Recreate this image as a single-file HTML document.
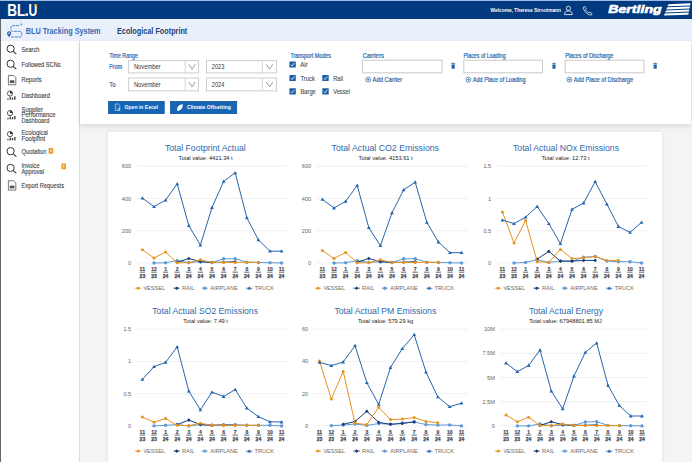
<!DOCTYPE html>
<html><head><meta charset="utf-8">
<style>
*{box-sizing:border-box;margin:0;padding:0}
html,body{width:692px;height:462px;overflow:hidden;background:#f3f4f6;font-family:"Liberation Sans", sans-serif;}
.a{position:absolute}
#hdr{left:0;top:0;width:692px;height:19px;background:#023a7f;border-top:1px solid #9ebbe6}
#sub{left:0;top:19px;width:692px;height:22px;background:#eaf0fb}
#side{left:0;top:41px;width:80px;height:421px;background:#fff;border-right:1px solid #dcdcdc}
#lb{left:0;top:19px;width:1px;height:443px;background:#666}
#filt{left:80px;top:41px;width:611px;height:83px;background:#fff;box-shadow:0 2px 5px rgba(0,0,0,0.12)}
#card{left:108px;top:132px;width:554px;height:340px;background:#fff;box-shadow:0 0 4px rgba(0,0,0,0.10)}
</style></head><body>
<div class="a" id="hdr"></div>
<div class="a" id="sub"></div>
<div class="a" id="side"></div>
<div class="a" id="lb"></div>
<div class="a" id="filt"></div>
<div class="a" id="card"></div>
<svg class="a" style="left:0;top:0" width="692" height="462" viewBox="0 0 692 462" font-family='"Liberation Sans", sans-serif'>
<text x="7.2" y="15.8" font-size="16.6" fill="#fff" textLength="18.0" lengthAdjust="spacingAndGlyphs" font-weight="bold">BL</text>
<rect x="25.4" y="13.4" width="2.6" height="2.4" fill="#fff"/>
<text x="28.4" y="15.8" font-size="16.6" fill="#fff" textLength="8.8" lengthAdjust="spacingAndGlyphs" font-weight="bold">U</text>
<rect x="34.2" y="4" width="2.8" height="2.2" fill="#e39a3a"/>
<text x="490.6" y="12.2" font-size="6.2" fill="#fff" textLength="70.4" lengthAdjust="spacingAndGlyphs" font-weight="bold">Welcome, Therese Strootmann</text>
<circle cx="568.4" cy="8.3" r="2.1" fill="none" stroke="#fff" stroke-width="0.8"/>
<path d="M564.6 14.6 C564.6 11.6 566.2 10.9 568.4 10.9 C570.6 10.9 572.2 11.6 572.2 14.6 Z" fill="none" stroke="#fff" stroke-width="0.8"/>
<path d="M583.5 7.2 C583.2 8.2 583.8 10.6 586.2 12.8 C588.6 15 590.6 15.3 591.6 14.8 L592 13.6 L589.9 12.2 L588.8 12.9 C587.6 12.3 586.1 10.8 585.5 9.6 L586.2 8.5 L584.8 6.4 Z" fill="none" stroke="#fff" stroke-width="0.75" stroke-linejoin="round"/>
<text x="608.2" y="12.9" font-size="11.0" fill="#fff" textLength="53.6" lengthAdjust="spacingAndGlyphs" font-weight="bold" font-style="italic" stroke="#fff" stroke-width="0.55">Bertling</text>
<path d="M668.5 4.2 L690.5 3.3 L690.2 5.4 L667.5 6.3 Z" fill="#fff"/>
<path d="M667.3 7.3 L689.9 6.4 L689.6 8.5 L666.3 9.4 Z" fill="#fff"/>
<path d="M666.1 10.4 L689.3 9.5 L689.0 11.6 L665.1 12.5 Z" fill="#fff"/>
<path d="M664.9 13.5 L688.7 12.6 L688.4 14.7 L663.9 15.6 Z" fill="#fff"/>
<path d="M19.2 25.6 L12.6 25.6 C10.2 25.6 10.2 31.4 12.6 31.4 L19.8 31.4 C22.6 31.4 22.6 37 19.8 37 L10.8 37" fill="none" stroke="#3f76bb" stroke-width="0.85" stroke-dasharray="3.2 0.6"/>
<path d="M9.1 37.3 C7.8 35.6 7.0 34.6 7.0 33.3 A2.1 2.1 0 0 1 11.2 33.3 C11.2 34.6 10.4 35.6 9.1 37.3 Z" fill="#2f6ab3"/>
<circle cx="9.1" cy="33.3" r="0.8" fill="#eaf0fb"/>
<path d="M20.3 23.8 L22.3 23.8 L21.3 25.4 Z" fill="#2f6ab3"/>
<text x="25.7" y="33.5" font-size="8.6" fill="#2f6db5" textLength="74.9" lengthAdjust="spacingAndGlyphs" font-weight="bold">BLU Tracking System</text>
<text x="117.0" y="33.5" font-size="8.6" fill="#22426f" textLength="70.3" lengthAdjust="spacingAndGlyphs" font-weight="bold">Ecological Footprint</text>
<text x="21.5" y="51.7" font-size="6.9" fill="#3f3f3f" textLength="18.0" lengthAdjust="spacingAndGlyphs" stroke="#3f3f3f" stroke-width="0.12">Search</text>
<circle cx="10.6" cy="48.7" r="3.6" fill="none" stroke="#363636" stroke-width="1.0"/>
<line x1="13.1" y1="51.2" x2="16.3" y2="54.1" stroke="#363636" stroke-width="1.1"/>
<text x="21.5" y="66.8" font-size="6.9" fill="#3f3f3f" textLength="39.1" lengthAdjust="spacingAndGlyphs" stroke="#3f3f3f" stroke-width="0.12">Followed SCNs</text>
<circle cx="10.6" cy="63.8" r="3.6" fill="none" stroke="#363636" stroke-width="1.0"/>
<line x1="13.1" y1="66.3" x2="16.3" y2="69.2" stroke="#363636" stroke-width="1.1"/>
<text x="21.5" y="82.2" font-size="6.9" fill="#3f3f3f" textLength="20.2" lengthAdjust="spacingAndGlyphs" stroke="#3f3f3f" stroke-width="0.12">Reports</text>
<path d="M8.4 75.4 L13.6 75.4 L15.8 77.6 L15.8 84.8 L8.4 84.8 Z" fill="none" stroke="#555" stroke-width="0.8"/>
<rect x="9.8" y="80.3" width="4.6" height="2.8" fill="#555"/>
<text x="21.5" y="97.5" font-size="6.9" fill="#3f3f3f" textLength="28.5" lengthAdjust="spacingAndGlyphs" stroke="#3f3f3f" stroke-width="0.12">Dashboard</text>
<circle cx="10.0" cy="93.5" r="2.6" fill="none" stroke="#333" stroke-width="0.8"/>
<path d="M10.0 93.5 L10.0 90.9 A2.6 2.6 0 0 1 12.6 93.5 Z" fill="#333"/>
<rect x="7.3" y="98.4" width="1.3" height="1.3" fill="#333"/>
<rect x="9.6" y="96.9" width="1.3" height="2.8" fill="#333"/>
<rect x="11.9" y="97.5" width="1.3" height="2.2" fill="#333"/>
<rect x="14.2" y="96.3" width="1.3" height="3.4" fill="#333"/>
<text x="21.5" y="111.5" font-size="6.9" fill="#3f3f3f" textLength="21.5" lengthAdjust="spacingAndGlyphs" stroke="#3f3f3f" stroke-width="0.12">Supplier</text>
<text x="21.5" y="117.2" font-size="6.9" fill="#3f3f3f" textLength="34.0" lengthAdjust="spacingAndGlyphs" stroke="#3f3f3f" stroke-width="0.12">Performance</text>
<text x="21.5" y="122.7" font-size="6.9" fill="#3f3f3f" textLength="27.8" lengthAdjust="spacingAndGlyphs" stroke="#3f3f3f" stroke-width="0.12">Dashboard</text>
<circle cx="10.0" cy="113.1" r="2.6" fill="none" stroke="#333" stroke-width="0.8"/>
<path d="M10.0 113.1 L10.0 110.5 A2.6 2.6 0 0 1 12.6 113.1 Z" fill="#333"/>
<rect x="7.3" y="118.0" width="1.3" height="1.3" fill="#333"/>
<rect x="9.6" y="116.5" width="1.3" height="2.8" fill="#333"/>
<rect x="11.9" y="117.1" width="1.3" height="2.2" fill="#333"/>
<rect x="14.2" y="115.9" width="1.3" height="3.4" fill="#333"/>
<text x="21.5" y="135.1" font-size="6.9" fill="#3f3f3f" textLength="26.4" lengthAdjust="spacingAndGlyphs" stroke="#3f3f3f" stroke-width="0.12">Ecological</text>
<text x="21.5" y="141.1" font-size="6.9" fill="#3f3f3f" textLength="23.8" lengthAdjust="spacingAndGlyphs" stroke="#3f3f3f" stroke-width="0.12">Footprint</text>
<circle cx="10.0" cy="134.1" r="2.6" fill="none" stroke="#333" stroke-width="0.8"/>
<path d="M10.0 134.1 L10.0 131.5 A2.6 2.6 0 0 1 12.6 134.1 Z" fill="#333"/>
<rect x="7.3" y="139.0" width="1.3" height="1.3" fill="#333"/>
<rect x="9.6" y="137.5" width="1.3" height="2.8" fill="#333"/>
<rect x="11.9" y="138.1" width="1.3" height="2.2" fill="#333"/>
<rect x="14.2" y="136.9" width="1.3" height="3.4" fill="#333"/>
<text x="21.5" y="154.2" font-size="6.9" fill="#3f3f3f" textLength="25.0" lengthAdjust="spacingAndGlyphs" stroke="#3f3f3f" stroke-width="0.12">Quotation</text>
<circle cx="10.6" cy="151.2" r="3.6" fill="none" stroke="#363636" stroke-width="1.0"/>
<line x1="13.1" y1="153.7" x2="16.3" y2="156.6" stroke="#363636" stroke-width="1.1"/>
<text x="21.5" y="167.9" font-size="6.9" fill="#3f3f3f" textLength="18.1" lengthAdjust="spacingAndGlyphs" stroke="#3f3f3f" stroke-width="0.12">Invoice</text>
<text x="21.5" y="173.8" font-size="6.9" fill="#3f3f3f" textLength="22.5" lengthAdjust="spacingAndGlyphs" stroke="#3f3f3f" stroke-width="0.12">Approval</text>
<circle cx="10.6" cy="167.9" r="3.6" fill="none" stroke="#363636" stroke-width="1.0"/>
<line x1="13.1" y1="170.4" x2="16.3" y2="173.3" stroke="#363636" stroke-width="1.1"/>
<text x="21.5" y="187.5" font-size="6.9" fill="#3f3f3f" textLength="42.6" lengthAdjust="spacingAndGlyphs" stroke="#3f3f3f" stroke-width="0.12">Export Requests</text>
<path d="M8.4 180.7 L13.6 180.7 L15.8 182.9 L15.8 190.1 L8.4 190.1 Z" fill="none" stroke="#555" stroke-width="0.8"/>
<rect x="9.8" y="185.6" width="4.6" height="2.8" fill="#555"/>
<rect x="48.6" y="148.0" width="4.6" height="5.8" rx="0.6" fill="#ee9a2a"/><rect x="50.2" y="149.4" width="1.4" height="2.6" fill="#fbd9a8"/>
<rect x="61.4" y="163.4" width="4.6" height="5.8" rx="0.6" fill="#ee9a2a"/><rect x="63.0" y="164.8" width="1.4" height="2.6" fill="#fbd9a8"/>
<text x="109.3" y="57.9" font-size="6.4" fill="#2f6cb0" textLength="28.7" lengthAdjust="spacingAndGlyphs" stroke="#2f6cb0" stroke-width="0.22">Time Range</text>
<text x="109.3" y="69.1" font-size="6.4" fill="#2f6cb0" textLength="12.7" lengthAdjust="spacingAndGlyphs" stroke="#2f6cb0" stroke-width="0.22">From</text>
<text x="109.3" y="86.9" font-size="6.4" fill="#2f6cb0" textLength="6.2" lengthAdjust="spacingAndGlyphs" stroke="#2f6cb0" stroke-width="0.22">To</text>
<text x="290.4" y="57.9" font-size="6.4" fill="#2f6cb0" textLength="40.6" lengthAdjust="spacingAndGlyphs" stroke="#2f6cb0" stroke-width="0.22">Transport Modes</text>
<text x="362.7" y="57.9" font-size="6.4" fill="#2f6cb0" textLength="21.2" lengthAdjust="spacingAndGlyphs" stroke="#2f6cb0" stroke-width="0.22">Carriers</text>
<text x="463.6" y="57.9" font-size="6.4" fill="#2f6cb0" textLength="42.0" lengthAdjust="spacingAndGlyphs" stroke="#2f6cb0" stroke-width="0.22">Places of Loading</text>
<text x="565.2" y="57.9" font-size="6.4" fill="#2f6cb0" textLength="48.0" lengthAdjust="spacingAndGlyphs" stroke="#2f6cb0" stroke-width="0.22">Places of Discharge</text>
<rect x="128.6" y="60.6" width="69.8" height="12.3" fill="#fff" stroke="#cdcdcd" stroke-width="1"/>
<line x1="185.2" x2="185.2" y1="61.1" y2="72.4" stroke="#cdcdcd" stroke-width="0.8"/>
<path d="M188.9 64.3 L192.1 69.2 L195.2 64.3" fill="none" stroke="#777" stroke-width="0.7"/>
<text x="133.9" y="69.2" font-size="6.8" fill="#333" textLength="26.7" lengthAdjust="spacingAndGlyphs">November</text>
<rect x="206.5" y="60.6" width="70.0" height="12.3" fill="#fff" stroke="#cdcdcd" stroke-width="1"/>
<line x1="262.3" x2="262.3" y1="61.1" y2="72.4" stroke="#cdcdcd" stroke-width="0.8"/>
<path d="M266.4 64.3 L269.6 69.2 L272.8 64.3" fill="none" stroke="#777" stroke-width="0.7"/>
<text x="211.8" y="69.2" font-size="6.8" fill="#333" textLength="12.6" lengthAdjust="spacingAndGlyphs">2023</text>
<rect x="128.6" y="78.0" width="69.8" height="12.9" fill="#fff" stroke="#cdcdcd" stroke-width="1"/>
<line x1="185.2" x2="185.2" y1="78.5" y2="90.4" stroke="#cdcdcd" stroke-width="0.8"/>
<path d="M188.9 82.0 L192.1 86.9 L195.2 82.0" fill="none" stroke="#777" stroke-width="0.7"/>
<text x="133.9" y="86.9" font-size="6.8" fill="#333" textLength="26.7" lengthAdjust="spacingAndGlyphs">November</text>
<rect x="206.5" y="78.0" width="70.0" height="12.9" fill="#fff" stroke="#cdcdcd" stroke-width="1"/>
<line x1="262.3" x2="262.3" y1="78.5" y2="90.4" stroke="#cdcdcd" stroke-width="0.8"/>
<path d="M266.4 82.0 L269.6 86.9 L272.8 82.0" fill="none" stroke="#777" stroke-width="0.7"/>
<text x="211.8" y="86.9" font-size="6.8" fill="#333" textLength="12.6" lengthAdjust="spacingAndGlyphs">2024</text>
<rect x="108.6" y="101.4" width="55.6" height="12.2" fill="#1766b3" stroke="#0e56a0" stroke-width="0.8"/>
<rect x="170.5" y="101.4" width="66.2" height="12.2" fill="#1766b3" stroke="#0e56a0" stroke-width="0.8"/>
<text x="124.6" y="109.4" font-size="6.2" fill="#fff" textLength="33.4" lengthAdjust="spacingAndGlyphs" font-weight="bold">Open in Excel</text>
<text x="187.0" y="109.4" font-size="6.2" fill="#fff" textLength="43.8" lengthAdjust="spacingAndGlyphs" font-weight="bold">Climate Offsetting</text>
<path d="M115.4 104.0 L118.2 104.0 L119.8 105.6 L119.8 110.4 L115.4 110.4 Z" fill="none" stroke="#dfeaf7" stroke-width="0.6"/><path d="M117.6 108.0 L119.8 110.6 M119.8 108.0 L117.6 110.6" stroke="#fff" stroke-width="0.6"/>
<path d="M177.2 110.8 C176.6 107 178.6 104.6 182.8 104.2 C182.8 108.2 181 110.6 177.2 110.8 Z" fill="#fff"/>
<rect x="289.4" y="61.4" width="6.4" height="6.2" rx="0.4" fill="#1c5ea8"/>
<path d="M290.9 64.7 L292.1 66.0 L294.4 63.0" fill="none" stroke="#fff" stroke-width="0.8"/>
<text x="300.2" y="66.9" font-size="6.9" fill="#4a4a4a" textLength="7.5" lengthAdjust="spacingAndGlyphs" stroke="#4a4a4a" stroke-width="0.1">Air</text>
<rect x="289.4" y="74.9" width="6.4" height="6.2" rx="0.4" fill="#1c5ea8"/>
<path d="M290.9 78.2 L292.1 79.5 L294.4 76.5" fill="none" stroke="#fff" stroke-width="0.8"/>
<text x="300.5" y="80.6" font-size="6.9" fill="#4a4a4a" textLength="14.3" lengthAdjust="spacingAndGlyphs" stroke="#4a4a4a" stroke-width="0.1">Truck</text>
<rect x="322.3" y="74.9" width="6.4" height="6.2" rx="0.4" fill="#1c5ea8"/>
<path d="M323.8 78.2 L325.0 79.5 L327.3 76.5" fill="none" stroke="#fff" stroke-width="0.8"/>
<text x="333.2" y="80.6" font-size="6.9" fill="#4a4a4a" textLength="9.7" lengthAdjust="spacingAndGlyphs" stroke="#4a4a4a" stroke-width="0.1">Rail</text>
<rect x="289.4" y="88.2" width="6.4" height="6.2" rx="0.4" fill="#1c5ea8"/>
<path d="M290.9 91.5 L292.1 92.8 L294.4 89.8" fill="none" stroke="#fff" stroke-width="0.8"/>
<text x="300.5" y="93.9" font-size="6.9" fill="#4a4a4a" textLength="15.3" lengthAdjust="spacingAndGlyphs" stroke="#4a4a4a" stroke-width="0.1">Barge</text>
<rect x="322.3" y="88.2" width="6.4" height="6.2" rx="0.4" fill="#1c5ea8"/>
<path d="M323.8 91.5 L325.0 92.8 L327.3 89.8" fill="none" stroke="#fff" stroke-width="0.8"/>
<text x="333.2" y="93.9" font-size="6.9" fill="#4a4a4a" textLength="16.8" lengthAdjust="spacingAndGlyphs" stroke="#4a4a4a" stroke-width="0.1">Vessel</text>
<rect x="362.5" y="60.2" width="79.6" height="12.6" fill="#fff" stroke="#c9c9c9" stroke-width="1"/>
<rect x="451.6" y="64.6" width="3.2" height="4.2" rx="0.4" fill="#2666ad"/>
<rect x="451.0" y="63.4" width="4.4" height="0.8" fill="#2666ad"/>
<rect x="452.4" y="62.7" width="1.6" height="0.8" fill="#2666ad"/>
<circle cx="368.2" cy="79.6" r="2.5" fill="none" stroke="#2b66aa" stroke-width="0.7"/>
<path d="M366.8 79.6 L369.6 79.6 M368.2 78.2 L368.2 81" stroke="#2b66aa" stroke-width="0.7"/>
<text x="372.6" y="81.8" font-size="6.6" fill="#2b66aa" textLength="29.7" lengthAdjust="spacingAndGlyphs" stroke="#2b66aa" stroke-width="0.2">Add Carrier</text>
<rect x="463.8" y="60.2" width="78.7" height="12.6" fill="#fff" stroke="#c9c9c9" stroke-width="1"/>
<rect x="552.4" y="64.6" width="3.2" height="4.2" rx="0.4" fill="#2666ad"/>
<rect x="551.8" y="63.4" width="4.4" height="0.8" fill="#2666ad"/>
<rect x="553.2" y="62.7" width="1.6" height="0.8" fill="#2666ad"/>
<circle cx="468.4" cy="79.6" r="2.5" fill="none" stroke="#2b66aa" stroke-width="0.7"/>
<path d="M467.0 79.6 L469.8 79.6 M468.4 78.2 L468.4 81" stroke="#2b66aa" stroke-width="0.7"/>
<text x="472.8" y="81.8" font-size="6.6" fill="#2b66aa" textLength="52.7" lengthAdjust="spacingAndGlyphs" stroke="#2b66aa" stroke-width="0.2">Add Place of Loading</text>
<rect x="565.2" y="60.2" width="78.7" height="12.6" fill="#fff" stroke="#c9c9c9" stroke-width="1"/>
<rect x="653.6" y="64.6" width="3.2" height="4.2" rx="0.4" fill="#2666ad"/>
<rect x="653.0" y="63.4" width="4.4" height="0.8" fill="#2666ad"/>
<rect x="654.4" y="62.7" width="1.6" height="0.8" fill="#2666ad"/>
<circle cx="569.4" cy="79.6" r="2.5" fill="none" stroke="#2b66aa" stroke-width="0.7"/>
<path d="M568.0 79.6 L570.8 79.6 M569.4 78.2 L569.4 81" stroke="#2b66aa" stroke-width="0.7"/>
<text x="573.8" y="81.8" font-size="6.6" fill="#2b66aa" textLength="59.3" lengthAdjust="spacingAndGlyphs" stroke="#2b66aa" stroke-width="0.2">Add Place of Discharge</text>
<text x="164.9" y="150.7" font-size="9.4" fill="#2e6aae" textLength="80.8" lengthAdjust="spacingAndGlyphs">Total Footprint Actual</text>
<text x="205.6" y="160.2" text-anchor="middle" font-size="5.7" fill="#222">Total value: 4421.34 t</text>
<line x1="136.6" x2="287.4" y1="263.0" y2="263.0" stroke="#e6e6e6" stroke-width="0.6"/>
<text x="131.2" y="265.0" text-anchor="end" font-size="5.6" fill="#666">0</text>
<line x1="136.6" x2="287.4" y1="230.7" y2="230.7" stroke="#e6e6e6" stroke-width="0.6"/>
<text x="131.2" y="232.7" text-anchor="end" font-size="5.6" fill="#666">200</text>
<line x1="136.6" x2="287.4" y1="198.5" y2="198.5" stroke="#e6e6e6" stroke-width="0.6"/>
<text x="131.2" y="200.5" text-anchor="end" font-size="5.6" fill="#666">400</text>
<line x1="136.6" x2="287.4" y1="166.2" y2="166.2" stroke="#e6e6e6" stroke-width="0.6"/>
<text x="131.2" y="168.2" text-anchor="end" font-size="5.6" fill="#666">600</text>
<text x="142.4" y="270.9" text-anchor="middle" font-size="5.0" fill="#3f4654" font-weight="bold" stroke="#3f4654" stroke-width="0.15" textLength="5.6" lengthAdjust="spacingAndGlyphs">11</text>
<line x1="139.8" x2="145.0" y1="272.2" y2="272.2" stroke="#4b5261" stroke-width="0.9"/>
<text x="142.4" y="278.0" text-anchor="middle" font-size="5.4" fill="#3f4654" font-weight="bold" stroke="#3f4654" stroke-width="0.25" textLength="5.6" lengthAdjust="spacingAndGlyphs">23</text>
<text x="154.0" y="270.9" text-anchor="middle" font-size="5.0" fill="#3f4654" font-weight="bold" stroke="#3f4654" stroke-width="0.15" textLength="5.6" lengthAdjust="spacingAndGlyphs">12</text>
<line x1="151.4" x2="156.6" y1="272.2" y2="272.2" stroke="#4b5261" stroke-width="0.9"/>
<text x="154.0" y="278.0" text-anchor="middle" font-size="5.4" fill="#3f4654" font-weight="bold" stroke="#3f4654" stroke-width="0.25" textLength="5.6" lengthAdjust="spacingAndGlyphs">23</text>
<text x="165.6" y="270.9" text-anchor="middle" font-size="5.0" fill="#3f4654" font-weight="bold" stroke="#3f4654" stroke-width="0.15" textLength="2.8" lengthAdjust="spacingAndGlyphs">1</text>
<line x1="163.0" x2="168.2" y1="272.2" y2="272.2" stroke="#4b5261" stroke-width="0.9"/>
<text x="165.6" y="278.0" text-anchor="middle" font-size="5.4" fill="#3f4654" font-weight="bold" stroke="#3f4654" stroke-width="0.25" textLength="5.6" lengthAdjust="spacingAndGlyphs">24</text>
<text x="177.2" y="270.9" text-anchor="middle" font-size="5.0" fill="#3f4654" font-weight="bold" stroke="#3f4654" stroke-width="0.15" textLength="2.8" lengthAdjust="spacingAndGlyphs">2</text>
<line x1="174.6" x2="179.8" y1="272.2" y2="272.2" stroke="#4b5261" stroke-width="0.9"/>
<text x="177.2" y="278.0" text-anchor="middle" font-size="5.4" fill="#3f4654" font-weight="bold" stroke="#3f4654" stroke-width="0.25" textLength="5.6" lengthAdjust="spacingAndGlyphs">24</text>
<text x="188.8" y="270.9" text-anchor="middle" font-size="5.0" fill="#3f4654" font-weight="bold" stroke="#3f4654" stroke-width="0.15" textLength="2.8" lengthAdjust="spacingAndGlyphs">3</text>
<line x1="186.2" x2="191.4" y1="272.2" y2="272.2" stroke="#4b5261" stroke-width="0.9"/>
<text x="188.8" y="278.0" text-anchor="middle" font-size="5.4" fill="#3f4654" font-weight="bold" stroke="#3f4654" stroke-width="0.25" textLength="5.6" lengthAdjust="spacingAndGlyphs">24</text>
<text x="200.4" y="270.9" text-anchor="middle" font-size="5.0" fill="#3f4654" font-weight="bold" stroke="#3f4654" stroke-width="0.15" textLength="2.8" lengthAdjust="spacingAndGlyphs">4</text>
<line x1="197.8" x2="203.0" y1="272.2" y2="272.2" stroke="#4b5261" stroke-width="0.9"/>
<text x="200.4" y="278.0" text-anchor="middle" font-size="5.4" fill="#3f4654" font-weight="bold" stroke="#3f4654" stroke-width="0.25" textLength="5.6" lengthAdjust="spacingAndGlyphs">24</text>
<text x="212.0" y="270.9" text-anchor="middle" font-size="5.0" fill="#3f4654" font-weight="bold" stroke="#3f4654" stroke-width="0.15" textLength="2.8" lengthAdjust="spacingAndGlyphs">5</text>
<line x1="209.4" x2="214.6" y1="272.2" y2="272.2" stroke="#4b5261" stroke-width="0.9"/>
<text x="212.0" y="278.0" text-anchor="middle" font-size="5.4" fill="#3f4654" font-weight="bold" stroke="#3f4654" stroke-width="0.25" textLength="5.6" lengthAdjust="spacingAndGlyphs">24</text>
<text x="223.6" y="270.9" text-anchor="middle" font-size="5.0" fill="#3f4654" font-weight="bold" stroke="#3f4654" stroke-width="0.15" textLength="2.8" lengthAdjust="spacingAndGlyphs">6</text>
<line x1="221.0" x2="226.2" y1="272.2" y2="272.2" stroke="#4b5261" stroke-width="0.9"/>
<text x="223.6" y="278.0" text-anchor="middle" font-size="5.4" fill="#3f4654" font-weight="bold" stroke="#3f4654" stroke-width="0.25" textLength="5.6" lengthAdjust="spacingAndGlyphs">24</text>
<text x="235.2" y="270.9" text-anchor="middle" font-size="5.0" fill="#3f4654" font-weight="bold" stroke="#3f4654" stroke-width="0.15" textLength="2.8" lengthAdjust="spacingAndGlyphs">7</text>
<line x1="232.6" x2="237.8" y1="272.2" y2="272.2" stroke="#4b5261" stroke-width="0.9"/>
<text x="235.2" y="278.0" text-anchor="middle" font-size="5.4" fill="#3f4654" font-weight="bold" stroke="#3f4654" stroke-width="0.25" textLength="5.6" lengthAdjust="spacingAndGlyphs">24</text>
<text x="246.8" y="270.9" text-anchor="middle" font-size="5.0" fill="#3f4654" font-weight="bold" stroke="#3f4654" stroke-width="0.15" textLength="2.8" lengthAdjust="spacingAndGlyphs">8</text>
<line x1="244.2" x2="249.4" y1="272.2" y2="272.2" stroke="#4b5261" stroke-width="0.9"/>
<text x="246.8" y="278.0" text-anchor="middle" font-size="5.4" fill="#3f4654" font-weight="bold" stroke="#3f4654" stroke-width="0.25" textLength="5.6" lengthAdjust="spacingAndGlyphs">24</text>
<text x="258.4" y="270.9" text-anchor="middle" font-size="5.0" fill="#3f4654" font-weight="bold" stroke="#3f4654" stroke-width="0.15" textLength="2.8" lengthAdjust="spacingAndGlyphs">9</text>
<line x1="255.8" x2="261.0" y1="272.2" y2="272.2" stroke="#4b5261" stroke-width="0.9"/>
<text x="258.4" y="278.0" text-anchor="middle" font-size="5.4" fill="#3f4654" font-weight="bold" stroke="#3f4654" stroke-width="0.25" textLength="5.6" lengthAdjust="spacingAndGlyphs">24</text>
<text x="270.0" y="270.9" text-anchor="middle" font-size="5.0" fill="#3f4654" font-weight="bold" stroke="#3f4654" stroke-width="0.15" textLength="5.6" lengthAdjust="spacingAndGlyphs">10</text>
<line x1="267.4" x2="272.6" y1="272.2" y2="272.2" stroke="#4b5261" stroke-width="0.9"/>
<text x="270.0" y="278.0" text-anchor="middle" font-size="5.4" fill="#3f4654" font-weight="bold" stroke="#3f4654" stroke-width="0.25" textLength="5.6" lengthAdjust="spacingAndGlyphs">24</text>
<text x="281.6" y="270.9" text-anchor="middle" font-size="5.0" fill="#3f4654" font-weight="bold" stroke="#3f4654" stroke-width="0.15" textLength="5.6" lengthAdjust="spacingAndGlyphs">11</text>
<line x1="279.0" x2="284.2" y1="272.2" y2="272.2" stroke="#4b5261" stroke-width="0.9"/>
<text x="281.6" y="278.0" text-anchor="middle" font-size="5.4" fill="#3f4654" font-weight="bold" stroke="#3f4654" stroke-width="0.25" textLength="5.6" lengthAdjust="spacingAndGlyphs">24</text>
<polyline points="154.0,263.0 165.6,262.8 177.2,260.6 188.8,262.5 200.4,261.7 212.0,262.5 223.6,258.8 235.2,258.8 246.8,262.2 258.4,262.5 270.0,262.7 281.6,263.0" fill="none" stroke="#5d9ad6" stroke-width="1.0" stroke-linejoin="round"/>
<circle cx="154.0" cy="263.0" r="1.7" fill="#5d9ad6"/>
<circle cx="165.6" cy="262.8" r="1.7" fill="#5d9ad6"/>
<circle cx="177.2" cy="260.6" r="1.7" fill="#5d9ad6"/>
<circle cx="188.8" cy="262.5" r="1.7" fill="#5d9ad6"/>
<circle cx="200.4" cy="261.7" r="1.7" fill="#5d9ad6"/>
<circle cx="212.0" cy="262.5" r="1.7" fill="#5d9ad6"/>
<circle cx="223.6" cy="258.8" r="1.7" fill="#5d9ad6"/>
<circle cx="235.2" cy="258.8" r="1.7" fill="#5d9ad6"/>
<circle cx="246.8" cy="262.2" r="1.7" fill="#5d9ad6"/>
<circle cx="258.4" cy="262.5" r="1.7" fill="#5d9ad6"/>
<circle cx="270.0" cy="262.7" r="1.7" fill="#5d9ad6"/>
<circle cx="281.6" cy="263.0" r="1.7" fill="#5d9ad6"/>
<polyline points="177.2,262.2 188.8,258.5 200.4,261.7 212.0,262.5 223.6,262.2 235.2,261.7" fill="none" stroke="#183a78" stroke-width="1.0" stroke-linejoin="round"/>
<path d="M177.2 260.4L179.0 262.2L177.2 264.0L175.4 262.2Z" fill="#183a78"/>
<path d="M188.8 256.7L190.6 258.5L188.8 260.3L187.0 258.5Z" fill="#183a78"/>
<path d="M200.4 259.9L202.2 261.7L200.4 263.5L198.6 261.7Z" fill="#183a78"/>
<path d="M212.0 260.7L213.8 262.5L212.0 264.3L210.2 262.5Z" fill="#183a78"/>
<path d="M223.6 260.4L225.4 262.2L223.6 264.0L221.8 262.2Z" fill="#183a78"/>
<path d="M235.2 259.9L237.0 261.7L235.2 263.5L233.4 261.7Z" fill="#183a78"/>
<polyline points="142.4,249.8 154.0,258.0 165.6,252.0 177.2,262.8 188.8,262.7 200.4,259.8 212.0,262.4 223.6,262.5 235.2,262.5 246.8,262.2 258.4,262.4" fill="none" stroke="#e8921f" stroke-width="1.0" stroke-linejoin="round"/>
<circle cx="142.4" cy="249.8" r="1.5" fill="#e8921f"/>
<circle cx="154.0" cy="258.0" r="1.5" fill="#e8921f"/>
<circle cx="165.6" cy="252.0" r="1.5" fill="#e8921f"/>
<circle cx="177.2" cy="262.8" r="1.5" fill="#e8921f"/>
<circle cx="188.8" cy="262.7" r="1.5" fill="#e8921f"/>
<circle cx="200.4" cy="259.8" r="1.5" fill="#e8921f"/>
<circle cx="212.0" cy="262.4" r="1.5" fill="#e8921f"/>
<circle cx="223.6" cy="262.5" r="1.5" fill="#e8921f"/>
<circle cx="235.2" cy="262.5" r="1.5" fill="#e8921f"/>
<circle cx="246.8" cy="262.2" r="1.5" fill="#e8921f"/>
<circle cx="258.4" cy="262.4" r="1.5" fill="#e8921f"/>
<polyline points="142.4,198.1 154.0,206.7 165.6,200.1 177.2,183.8 188.8,225.6 200.4,245.1 212.0,207.5 223.6,181.4 235.2,172.8 246.8,217.7 258.4,239.9 270.0,251.2 281.6,251.2" fill="none" stroke="#2566ae" stroke-width="1.0" stroke-linejoin="round"/>
<path d="M142.4 196.2L144.3 199.5L140.5 199.5Z" fill="#2566ae"/>
<path d="M154.0 204.8L155.9 208.1L152.1 208.1Z" fill="#2566ae"/>
<path d="M165.6 198.2L167.5 201.5L163.7 201.5Z" fill="#2566ae"/>
<path d="M177.2 181.9L179.1 185.2L175.3 185.2Z" fill="#2566ae"/>
<path d="M188.8 223.7L190.7 227.0L186.9 227.0Z" fill="#2566ae"/>
<path d="M200.4 243.2L202.3 246.5L198.5 246.5Z" fill="#2566ae"/>
<path d="M212.0 205.6L213.9 208.9L210.1 208.9Z" fill="#2566ae"/>
<path d="M223.6 179.5L225.5 182.8L221.7 182.8Z" fill="#2566ae"/>
<path d="M235.2 170.9L237.1 174.2L233.3 174.2Z" fill="#2566ae"/>
<path d="M246.8 215.8L248.7 219.1L244.9 219.1Z" fill="#2566ae"/>
<path d="M258.4 238.0L260.3 241.3L256.5 241.3Z" fill="#2566ae"/>
<path d="M270.0 249.3L271.9 252.6L268.1 252.6Z" fill="#2566ae"/>
<path d="M281.6 249.3L283.5 252.6L279.7 252.6Z" fill="#2566ae"/>
<line x1="134.8" x2="141.3" y1="288.2" y2="288.2" stroke="#e8921f" stroke-width="0.8"/>
<circle cx="138.1" cy="288.2" r="1.5" fill="#e8921f"/>
<text x="143.4" y="290.2" font-size="5.6" fill="#6b6b6b">VESSEL</text>
<line x1="173.4" x2="179.9" y1="288.2" y2="288.2" stroke="#183a78" stroke-width="0.8"/>
<path d="M176.7 286.4L178.5 288.2L176.7 290.0L174.8 288.2Z" fill="#183a78"/>
<text x="182.0" y="290.2" font-size="5.6" fill="#6b6b6b">RAIL</text>
<line x1="201.5" x2="208.0" y1="288.2" y2="288.2" stroke="#5d9ad6" stroke-width="0.8"/>
<circle cx="204.8" cy="288.2" r="1.7" fill="#5d9ad6"/>
<text x="210.2" y="290.2" font-size="5.6" fill="#6b6b6b">AIRPLANE</text>
<line x1="246.0" x2="252.5" y1="288.2" y2="288.2" stroke="#2566ae" stroke-width="0.8"/>
<path d="M249.2 286.3L251.2 289.6L247.3 289.6Z" fill="#2566ae"/>
<text x="254.6" y="290.2" font-size="5.6" fill="#6b6b6b">TRUCK</text>
<text x="331.6" y="150.7" font-size="9.4" fill="#2e6aae" textLength="107.4" lengthAdjust="spacingAndGlyphs">Total Actual CO2 Emissions</text>
<text x="385.6" y="160.2" text-anchor="middle" font-size="5.7" fill="#222">Total value: 4153.61 t</text>
<line x1="316.6" x2="467.4" y1="263.0" y2="263.0" stroke="#e6e6e6" stroke-width="0.6"/>
<text x="311.2" y="265.0" text-anchor="end" font-size="5.6" fill="#666">0</text>
<line x1="316.6" x2="467.4" y1="230.7" y2="230.7" stroke="#e6e6e6" stroke-width="0.6"/>
<text x="311.2" y="232.7" text-anchor="end" font-size="5.6" fill="#666">200</text>
<line x1="316.6" x2="467.4" y1="198.5" y2="198.5" stroke="#e6e6e6" stroke-width="0.6"/>
<text x="311.2" y="200.5" text-anchor="end" font-size="5.6" fill="#666">400</text>
<line x1="316.6" x2="467.4" y1="166.2" y2="166.2" stroke="#e6e6e6" stroke-width="0.6"/>
<text x="311.2" y="168.2" text-anchor="end" font-size="5.6" fill="#666">600</text>
<text x="322.4" y="270.9" text-anchor="middle" font-size="5.0" fill="#3f4654" font-weight="bold" stroke="#3f4654" stroke-width="0.15" textLength="5.6" lengthAdjust="spacingAndGlyphs">11</text>
<line x1="319.8" x2="325.0" y1="272.2" y2="272.2" stroke="#4b5261" stroke-width="0.9"/>
<text x="322.4" y="278.0" text-anchor="middle" font-size="5.4" fill="#3f4654" font-weight="bold" stroke="#3f4654" stroke-width="0.25" textLength="5.6" lengthAdjust="spacingAndGlyphs">23</text>
<text x="334.0" y="270.9" text-anchor="middle" font-size="5.0" fill="#3f4654" font-weight="bold" stroke="#3f4654" stroke-width="0.15" textLength="5.6" lengthAdjust="spacingAndGlyphs">12</text>
<line x1="331.4" x2="336.6" y1="272.2" y2="272.2" stroke="#4b5261" stroke-width="0.9"/>
<text x="334.0" y="278.0" text-anchor="middle" font-size="5.4" fill="#3f4654" font-weight="bold" stroke="#3f4654" stroke-width="0.25" textLength="5.6" lengthAdjust="spacingAndGlyphs">23</text>
<text x="345.6" y="270.9" text-anchor="middle" font-size="5.0" fill="#3f4654" font-weight="bold" stroke="#3f4654" stroke-width="0.15" textLength="2.8" lengthAdjust="spacingAndGlyphs">1</text>
<line x1="343.0" x2="348.2" y1="272.2" y2="272.2" stroke="#4b5261" stroke-width="0.9"/>
<text x="345.6" y="278.0" text-anchor="middle" font-size="5.4" fill="#3f4654" font-weight="bold" stroke="#3f4654" stroke-width="0.25" textLength="5.6" lengthAdjust="spacingAndGlyphs">24</text>
<text x="357.2" y="270.9" text-anchor="middle" font-size="5.0" fill="#3f4654" font-weight="bold" stroke="#3f4654" stroke-width="0.15" textLength="2.8" lengthAdjust="spacingAndGlyphs">2</text>
<line x1="354.6" x2="359.8" y1="272.2" y2="272.2" stroke="#4b5261" stroke-width="0.9"/>
<text x="357.2" y="278.0" text-anchor="middle" font-size="5.4" fill="#3f4654" font-weight="bold" stroke="#3f4654" stroke-width="0.25" textLength="5.6" lengthAdjust="spacingAndGlyphs">24</text>
<text x="368.8" y="270.9" text-anchor="middle" font-size="5.0" fill="#3f4654" font-weight="bold" stroke="#3f4654" stroke-width="0.15" textLength="2.8" lengthAdjust="spacingAndGlyphs">3</text>
<line x1="366.2" x2="371.4" y1="272.2" y2="272.2" stroke="#4b5261" stroke-width="0.9"/>
<text x="368.8" y="278.0" text-anchor="middle" font-size="5.4" fill="#3f4654" font-weight="bold" stroke="#3f4654" stroke-width="0.25" textLength="5.6" lengthAdjust="spacingAndGlyphs">24</text>
<text x="380.4" y="270.9" text-anchor="middle" font-size="5.0" fill="#3f4654" font-weight="bold" stroke="#3f4654" stroke-width="0.15" textLength="2.8" lengthAdjust="spacingAndGlyphs">4</text>
<line x1="377.8" x2="383.0" y1="272.2" y2="272.2" stroke="#4b5261" stroke-width="0.9"/>
<text x="380.4" y="278.0" text-anchor="middle" font-size="5.4" fill="#3f4654" font-weight="bold" stroke="#3f4654" stroke-width="0.25" textLength="5.6" lengthAdjust="spacingAndGlyphs">24</text>
<text x="392.0" y="270.9" text-anchor="middle" font-size="5.0" fill="#3f4654" font-weight="bold" stroke="#3f4654" stroke-width="0.15" textLength="2.8" lengthAdjust="spacingAndGlyphs">5</text>
<line x1="389.4" x2="394.6" y1="272.2" y2="272.2" stroke="#4b5261" stroke-width="0.9"/>
<text x="392.0" y="278.0" text-anchor="middle" font-size="5.4" fill="#3f4654" font-weight="bold" stroke="#3f4654" stroke-width="0.25" textLength="5.6" lengthAdjust="spacingAndGlyphs">24</text>
<text x="403.6" y="270.9" text-anchor="middle" font-size="5.0" fill="#3f4654" font-weight="bold" stroke="#3f4654" stroke-width="0.15" textLength="2.8" lengthAdjust="spacingAndGlyphs">6</text>
<line x1="401.0" x2="406.2" y1="272.2" y2="272.2" stroke="#4b5261" stroke-width="0.9"/>
<text x="403.6" y="278.0" text-anchor="middle" font-size="5.4" fill="#3f4654" font-weight="bold" stroke="#3f4654" stroke-width="0.25" textLength="5.6" lengthAdjust="spacingAndGlyphs">24</text>
<text x="415.2" y="270.9" text-anchor="middle" font-size="5.0" fill="#3f4654" font-weight="bold" stroke="#3f4654" stroke-width="0.15" textLength="2.8" lengthAdjust="spacingAndGlyphs">7</text>
<line x1="412.6" x2="417.8" y1="272.2" y2="272.2" stroke="#4b5261" stroke-width="0.9"/>
<text x="415.2" y="278.0" text-anchor="middle" font-size="5.4" fill="#3f4654" font-weight="bold" stroke="#3f4654" stroke-width="0.25" textLength="5.6" lengthAdjust="spacingAndGlyphs">24</text>
<text x="426.8" y="270.9" text-anchor="middle" font-size="5.0" fill="#3f4654" font-weight="bold" stroke="#3f4654" stroke-width="0.15" textLength="2.8" lengthAdjust="spacingAndGlyphs">8</text>
<line x1="424.2" x2="429.4" y1="272.2" y2="272.2" stroke="#4b5261" stroke-width="0.9"/>
<text x="426.8" y="278.0" text-anchor="middle" font-size="5.4" fill="#3f4654" font-weight="bold" stroke="#3f4654" stroke-width="0.25" textLength="5.6" lengthAdjust="spacingAndGlyphs">24</text>
<text x="438.4" y="270.9" text-anchor="middle" font-size="5.0" fill="#3f4654" font-weight="bold" stroke="#3f4654" stroke-width="0.15" textLength="2.8" lengthAdjust="spacingAndGlyphs">9</text>
<line x1="435.8" x2="441.0" y1="272.2" y2="272.2" stroke="#4b5261" stroke-width="0.9"/>
<text x="438.4" y="278.0" text-anchor="middle" font-size="5.4" fill="#3f4654" font-weight="bold" stroke="#3f4654" stroke-width="0.25" textLength="5.6" lengthAdjust="spacingAndGlyphs">24</text>
<text x="450.0" y="270.9" text-anchor="middle" font-size="5.0" fill="#3f4654" font-weight="bold" stroke="#3f4654" stroke-width="0.15" textLength="5.6" lengthAdjust="spacingAndGlyphs">10</text>
<line x1="447.4" x2="452.6" y1="272.2" y2="272.2" stroke="#4b5261" stroke-width="0.9"/>
<text x="450.0" y="278.0" text-anchor="middle" font-size="5.4" fill="#3f4654" font-weight="bold" stroke="#3f4654" stroke-width="0.25" textLength="5.6" lengthAdjust="spacingAndGlyphs">24</text>
<text x="461.6" y="270.9" text-anchor="middle" font-size="5.0" fill="#3f4654" font-weight="bold" stroke="#3f4654" stroke-width="0.15" textLength="5.6" lengthAdjust="spacingAndGlyphs">11</text>
<line x1="459.0" x2="464.2" y1="272.2" y2="272.2" stroke="#4b5261" stroke-width="0.9"/>
<text x="461.6" y="278.0" text-anchor="middle" font-size="5.4" fill="#3f4654" font-weight="bold" stroke="#3f4654" stroke-width="0.25" textLength="5.6" lengthAdjust="spacingAndGlyphs">24</text>
<polyline points="334.0,263.0 345.6,262.8 357.2,260.6 368.8,262.5 380.4,261.7 392.0,262.5 403.6,258.8 415.2,258.8 426.8,262.2 438.4,262.5 450.0,262.7 461.6,263.0" fill="none" stroke="#5d9ad6" stroke-width="1.0" stroke-linejoin="round"/>
<circle cx="334.0" cy="263.0" r="1.7" fill="#5d9ad6"/>
<circle cx="345.6" cy="262.8" r="1.7" fill="#5d9ad6"/>
<circle cx="357.2" cy="260.6" r="1.7" fill="#5d9ad6"/>
<circle cx="368.8" cy="262.5" r="1.7" fill="#5d9ad6"/>
<circle cx="380.4" cy="261.7" r="1.7" fill="#5d9ad6"/>
<circle cx="392.0" cy="262.5" r="1.7" fill="#5d9ad6"/>
<circle cx="403.6" cy="258.8" r="1.7" fill="#5d9ad6"/>
<circle cx="415.2" cy="258.8" r="1.7" fill="#5d9ad6"/>
<circle cx="426.8" cy="262.2" r="1.7" fill="#5d9ad6"/>
<circle cx="438.4" cy="262.5" r="1.7" fill="#5d9ad6"/>
<circle cx="450.0" cy="262.7" r="1.7" fill="#5d9ad6"/>
<circle cx="461.6" cy="263.0" r="1.7" fill="#5d9ad6"/>
<polyline points="357.2,262.2 368.8,258.5 380.4,261.7 392.0,262.5 403.6,262.2 415.2,261.7" fill="none" stroke="#183a78" stroke-width="1.0" stroke-linejoin="round"/>
<path d="M357.2 260.4L359.0 262.2L357.2 264.0L355.4 262.2Z" fill="#183a78"/>
<path d="M368.8 256.7L370.6 258.5L368.8 260.3L367.0 258.5Z" fill="#183a78"/>
<path d="M380.4 259.9L382.2 261.7L380.4 263.5L378.6 261.7Z" fill="#183a78"/>
<path d="M392.0 260.7L393.8 262.5L392.0 264.3L390.2 262.5Z" fill="#183a78"/>
<path d="M403.6 260.4L405.4 262.2L403.6 264.0L401.8 262.2Z" fill="#183a78"/>
<path d="M415.2 259.9L417.0 261.7L415.2 263.5L413.4 261.7Z" fill="#183a78"/>
<polyline points="322.4,250.4 334.0,258.6 345.6,252.4 357.2,262.8 368.8,262.7 380.4,259.8 392.0,262.4 403.6,262.5 415.2,262.5 426.8,262.2 438.4,262.4" fill="none" stroke="#e8921f" stroke-width="1.0" stroke-linejoin="round"/>
<circle cx="322.4" cy="250.4" r="1.5" fill="#e8921f"/>
<circle cx="334.0" cy="258.6" r="1.5" fill="#e8921f"/>
<circle cx="345.6" cy="252.4" r="1.5" fill="#e8921f"/>
<circle cx="357.2" cy="262.8" r="1.5" fill="#e8921f"/>
<circle cx="368.8" cy="262.7" r="1.5" fill="#e8921f"/>
<circle cx="380.4" cy="259.8" r="1.5" fill="#e8921f"/>
<circle cx="392.0" cy="262.4" r="1.5" fill="#e8921f"/>
<circle cx="403.6" cy="262.5" r="1.5" fill="#e8921f"/>
<circle cx="415.2" cy="262.5" r="1.5" fill="#e8921f"/>
<circle cx="426.8" cy="262.2" r="1.5" fill="#e8921f"/>
<circle cx="438.4" cy="262.4" r="1.5" fill="#e8921f"/>
<polyline points="322.4,199.4 334.0,208.0 345.6,201.4 357.2,185.4 368.8,227.7 380.4,245.7 392.0,212.8 403.6,189.9 415.2,182.2 426.8,222.3 438.4,242.0 450.0,252.7 461.6,252.7" fill="none" stroke="#2566ae" stroke-width="1.0" stroke-linejoin="round"/>
<path d="M322.4 197.5L324.3 200.8L320.5 200.8Z" fill="#2566ae"/>
<path d="M334.0 206.1L335.9 209.4L332.1 209.4Z" fill="#2566ae"/>
<path d="M345.6 199.5L347.5 202.8L343.7 202.8Z" fill="#2566ae"/>
<path d="M357.2 183.5L359.1 186.8L355.3 186.8Z" fill="#2566ae"/>
<path d="M368.8 225.8L370.7 229.1L366.9 229.1Z" fill="#2566ae"/>
<path d="M380.4 243.8L382.3 247.1L378.5 247.1Z" fill="#2566ae"/>
<path d="M392.0 210.9L393.9 214.2L390.1 214.2Z" fill="#2566ae"/>
<path d="M403.6 188.0L405.5 191.3L401.7 191.3Z" fill="#2566ae"/>
<path d="M415.2 180.3L417.1 183.6L413.3 183.6Z" fill="#2566ae"/>
<path d="M426.8 220.4L428.7 223.7L424.9 223.7Z" fill="#2566ae"/>
<path d="M438.4 240.1L440.3 243.4L436.5 243.4Z" fill="#2566ae"/>
<path d="M450.0 250.8L451.9 254.1L448.1 254.1Z" fill="#2566ae"/>
<path d="M461.6 250.8L463.5 254.1L459.7 254.1Z" fill="#2566ae"/>
<line x1="314.8" x2="321.3" y1="288.2" y2="288.2" stroke="#e8921f" stroke-width="0.8"/>
<circle cx="318.1" cy="288.2" r="1.5" fill="#e8921f"/>
<text x="323.4" y="290.2" font-size="5.6" fill="#6b6b6b">VESSEL</text>
<line x1="353.4" x2="359.9" y1="288.2" y2="288.2" stroke="#183a78" stroke-width="0.8"/>
<path d="M356.6 286.4L358.4 288.2L356.6 290.0L354.8 288.2Z" fill="#183a78"/>
<text x="362.0" y="290.2" font-size="5.6" fill="#6b6b6b">RAIL</text>
<line x1="381.5" x2="388.0" y1="288.2" y2="288.2" stroke="#5d9ad6" stroke-width="0.8"/>
<circle cx="384.8" cy="288.2" r="1.7" fill="#5d9ad6"/>
<text x="390.2" y="290.2" font-size="5.6" fill="#6b6b6b">AIRPLANE</text>
<line x1="426.0" x2="432.5" y1="288.2" y2="288.2" stroke="#2566ae" stroke-width="0.8"/>
<path d="M429.2 286.3L431.1 289.6L427.4 289.6Z" fill="#2566ae"/>
<text x="434.6" y="290.2" font-size="5.6" fill="#6b6b6b">TRUCK</text>
<text x="513.0" y="150.7" font-size="9.4" fill="#2e6aae" textLength="106.0" lengthAdjust="spacingAndGlyphs">Total Actual NOx Emissions</text>
<text x="565.6" y="160.2" text-anchor="middle" font-size="5.7" fill="#222">Total value: 12.73 t</text>
<line x1="496.6" x2="647.4" y1="263.0" y2="263.0" stroke="#e6e6e6" stroke-width="0.6"/>
<text x="491.2" y="265.0" text-anchor="end" font-size="5.6" fill="#666">0</text>
<line x1="496.6" x2="647.4" y1="230.7" y2="230.7" stroke="#e6e6e6" stroke-width="0.6"/>
<text x="491.2" y="232.7" text-anchor="end" font-size="5.6" fill="#666">0.5</text>
<line x1="496.6" x2="647.4" y1="198.5" y2="198.5" stroke="#e6e6e6" stroke-width="0.6"/>
<text x="491.2" y="200.5" text-anchor="end" font-size="5.6" fill="#666">1</text>
<line x1="496.6" x2="647.4" y1="166.2" y2="166.2" stroke="#e6e6e6" stroke-width="0.6"/>
<text x="491.2" y="168.2" text-anchor="end" font-size="5.6" fill="#666">1.5</text>
<text x="502.4" y="270.9" text-anchor="middle" font-size="5.0" fill="#3f4654" font-weight="bold" stroke="#3f4654" stroke-width="0.15" textLength="5.6" lengthAdjust="spacingAndGlyphs">11</text>
<line x1="499.8" x2="505.0" y1="272.2" y2="272.2" stroke="#4b5261" stroke-width="0.9"/>
<text x="502.4" y="278.0" text-anchor="middle" font-size="5.4" fill="#3f4654" font-weight="bold" stroke="#3f4654" stroke-width="0.25" textLength="5.6" lengthAdjust="spacingAndGlyphs">23</text>
<text x="514.0" y="270.9" text-anchor="middle" font-size="5.0" fill="#3f4654" font-weight="bold" stroke="#3f4654" stroke-width="0.15" textLength="5.6" lengthAdjust="spacingAndGlyphs">12</text>
<line x1="511.4" x2="516.6" y1="272.2" y2="272.2" stroke="#4b5261" stroke-width="0.9"/>
<text x="514.0" y="278.0" text-anchor="middle" font-size="5.4" fill="#3f4654" font-weight="bold" stroke="#3f4654" stroke-width="0.25" textLength="5.6" lengthAdjust="spacingAndGlyphs">23</text>
<text x="525.6" y="270.9" text-anchor="middle" font-size="5.0" fill="#3f4654" font-weight="bold" stroke="#3f4654" stroke-width="0.15" textLength="2.8" lengthAdjust="spacingAndGlyphs">1</text>
<line x1="523.0" x2="528.2" y1="272.2" y2="272.2" stroke="#4b5261" stroke-width="0.9"/>
<text x="525.6" y="278.0" text-anchor="middle" font-size="5.4" fill="#3f4654" font-weight="bold" stroke="#3f4654" stroke-width="0.25" textLength="5.6" lengthAdjust="spacingAndGlyphs">24</text>
<text x="537.2" y="270.9" text-anchor="middle" font-size="5.0" fill="#3f4654" font-weight="bold" stroke="#3f4654" stroke-width="0.15" textLength="2.8" lengthAdjust="spacingAndGlyphs">2</text>
<line x1="534.6" x2="539.8" y1="272.2" y2="272.2" stroke="#4b5261" stroke-width="0.9"/>
<text x="537.2" y="278.0" text-anchor="middle" font-size="5.4" fill="#3f4654" font-weight="bold" stroke="#3f4654" stroke-width="0.25" textLength="5.6" lengthAdjust="spacingAndGlyphs">24</text>
<text x="548.8" y="270.9" text-anchor="middle" font-size="5.0" fill="#3f4654" font-weight="bold" stroke="#3f4654" stroke-width="0.15" textLength="2.8" lengthAdjust="spacingAndGlyphs">3</text>
<line x1="546.2" x2="551.4" y1="272.2" y2="272.2" stroke="#4b5261" stroke-width="0.9"/>
<text x="548.8" y="278.0" text-anchor="middle" font-size="5.4" fill="#3f4654" font-weight="bold" stroke="#3f4654" stroke-width="0.25" textLength="5.6" lengthAdjust="spacingAndGlyphs">24</text>
<text x="560.4" y="270.9" text-anchor="middle" font-size="5.0" fill="#3f4654" font-weight="bold" stroke="#3f4654" stroke-width="0.15" textLength="2.8" lengthAdjust="spacingAndGlyphs">4</text>
<line x1="557.8" x2="563.0" y1="272.2" y2="272.2" stroke="#4b5261" stroke-width="0.9"/>
<text x="560.4" y="278.0" text-anchor="middle" font-size="5.4" fill="#3f4654" font-weight="bold" stroke="#3f4654" stroke-width="0.25" textLength="5.6" lengthAdjust="spacingAndGlyphs">24</text>
<text x="572.0" y="270.9" text-anchor="middle" font-size="5.0" fill="#3f4654" font-weight="bold" stroke="#3f4654" stroke-width="0.15" textLength="2.8" lengthAdjust="spacingAndGlyphs">5</text>
<line x1="569.4" x2="574.6" y1="272.2" y2="272.2" stroke="#4b5261" stroke-width="0.9"/>
<text x="572.0" y="278.0" text-anchor="middle" font-size="5.4" fill="#3f4654" font-weight="bold" stroke="#3f4654" stroke-width="0.25" textLength="5.6" lengthAdjust="spacingAndGlyphs">24</text>
<text x="583.6" y="270.9" text-anchor="middle" font-size="5.0" fill="#3f4654" font-weight="bold" stroke="#3f4654" stroke-width="0.15" textLength="2.8" lengthAdjust="spacingAndGlyphs">6</text>
<line x1="581.0" x2="586.2" y1="272.2" y2="272.2" stroke="#4b5261" stroke-width="0.9"/>
<text x="583.6" y="278.0" text-anchor="middle" font-size="5.4" fill="#3f4654" font-weight="bold" stroke="#3f4654" stroke-width="0.25" textLength="5.6" lengthAdjust="spacingAndGlyphs">24</text>
<text x="595.2" y="270.9" text-anchor="middle" font-size="5.0" fill="#3f4654" font-weight="bold" stroke="#3f4654" stroke-width="0.15" textLength="2.8" lengthAdjust="spacingAndGlyphs">7</text>
<line x1="592.6" x2="597.8" y1="272.2" y2="272.2" stroke="#4b5261" stroke-width="0.9"/>
<text x="595.2" y="278.0" text-anchor="middle" font-size="5.4" fill="#3f4654" font-weight="bold" stroke="#3f4654" stroke-width="0.25" textLength="5.6" lengthAdjust="spacingAndGlyphs">24</text>
<text x="606.8" y="270.9" text-anchor="middle" font-size="5.0" fill="#3f4654" font-weight="bold" stroke="#3f4654" stroke-width="0.15" textLength="2.8" lengthAdjust="spacingAndGlyphs">8</text>
<line x1="604.2" x2="609.4" y1="272.2" y2="272.2" stroke="#4b5261" stroke-width="0.9"/>
<text x="606.8" y="278.0" text-anchor="middle" font-size="5.4" fill="#3f4654" font-weight="bold" stroke="#3f4654" stroke-width="0.25" textLength="5.6" lengthAdjust="spacingAndGlyphs">24</text>
<text x="618.4" y="270.9" text-anchor="middle" font-size="5.0" fill="#3f4654" font-weight="bold" stroke="#3f4654" stroke-width="0.15" textLength="2.8" lengthAdjust="spacingAndGlyphs">9</text>
<line x1="615.8" x2="621.0" y1="272.2" y2="272.2" stroke="#4b5261" stroke-width="0.9"/>
<text x="618.4" y="278.0" text-anchor="middle" font-size="5.4" fill="#3f4654" font-weight="bold" stroke="#3f4654" stroke-width="0.25" textLength="5.6" lengthAdjust="spacingAndGlyphs">24</text>
<text x="630.0" y="270.9" text-anchor="middle" font-size="5.0" fill="#3f4654" font-weight="bold" stroke="#3f4654" stroke-width="0.15" textLength="5.6" lengthAdjust="spacingAndGlyphs">10</text>
<line x1="627.4" x2="632.6" y1="272.2" y2="272.2" stroke="#4b5261" stroke-width="0.9"/>
<text x="630.0" y="278.0" text-anchor="middle" font-size="5.4" fill="#3f4654" font-weight="bold" stroke="#3f4654" stroke-width="0.25" textLength="5.6" lengthAdjust="spacingAndGlyphs">24</text>
<text x="641.6" y="270.9" text-anchor="middle" font-size="5.0" fill="#3f4654" font-weight="bold" stroke="#3f4654" stroke-width="0.15" textLength="5.6" lengthAdjust="spacingAndGlyphs">11</text>
<line x1="639.0" x2="644.2" y1="272.2" y2="272.2" stroke="#4b5261" stroke-width="0.9"/>
<text x="641.6" y="278.0" text-anchor="middle" font-size="5.4" fill="#3f4654" font-weight="bold" stroke="#3f4654" stroke-width="0.25" textLength="5.6" lengthAdjust="spacingAndGlyphs">24</text>
<polyline points="514.0,263.0 525.6,262.4 537.2,259.8 548.8,262.4 560.4,261.1 572.0,261.1 583.6,257.2 595.2,256.5 606.8,261.1 618.4,261.7 630.0,261.7 641.6,263.0" fill="none" stroke="#5d9ad6" stroke-width="1.0" stroke-linejoin="round"/>
<circle cx="514.0" cy="263.0" r="1.7" fill="#5d9ad6"/>
<circle cx="525.6" cy="262.4" r="1.7" fill="#5d9ad6"/>
<circle cx="537.2" cy="259.8" r="1.7" fill="#5d9ad6"/>
<circle cx="548.8" cy="262.4" r="1.7" fill="#5d9ad6"/>
<circle cx="560.4" cy="261.1" r="1.7" fill="#5d9ad6"/>
<circle cx="572.0" cy="261.1" r="1.7" fill="#5d9ad6"/>
<circle cx="583.6" cy="257.2" r="1.7" fill="#5d9ad6"/>
<circle cx="595.2" cy="256.5" r="1.7" fill="#5d9ad6"/>
<circle cx="606.8" cy="261.1" r="1.7" fill="#5d9ad6"/>
<circle cx="618.4" cy="261.7" r="1.7" fill="#5d9ad6"/>
<circle cx="630.0" cy="261.7" r="1.7" fill="#5d9ad6"/>
<circle cx="641.6" cy="263.0" r="1.7" fill="#5d9ad6"/>
<polyline points="537.2,259.1 548.8,251.4 560.4,261.1 572.0,261.1 583.6,260.4 595.2,260.4" fill="none" stroke="#183a78" stroke-width="1.0" stroke-linejoin="round"/>
<path d="M537.2 257.3L539.0 259.1L537.2 260.9L535.4 259.1Z" fill="#183a78"/>
<path d="M548.8 249.6L550.6 251.4L548.8 253.2L547.0 251.4Z" fill="#183a78"/>
<path d="M560.4 259.3L562.2 261.1L560.4 262.9L558.6 261.1Z" fill="#183a78"/>
<path d="M572.0 259.3L573.8 261.1L572.0 262.9L570.2 261.1Z" fill="#183a78"/>
<path d="M583.6 258.6L585.4 260.4L583.6 262.2L581.8 260.4Z" fill="#183a78"/>
<path d="M595.2 258.6L597.0 260.4L595.2 262.2L593.4 260.4Z" fill="#183a78"/>
<polyline points="502.4,212.0 514.0,243.0 525.6,220.4 537.2,261.7 548.8,262.4 560.4,249.4 572.0,258.5 583.6,257.8 595.2,256.5 606.8,260.4 618.4,260.4" fill="none" stroke="#e8921f" stroke-width="1.0" stroke-linejoin="round"/>
<circle cx="502.4" cy="212.0" r="1.5" fill="#e8921f"/>
<circle cx="514.0" cy="243.0" r="1.5" fill="#e8921f"/>
<circle cx="525.6" cy="220.4" r="1.5" fill="#e8921f"/>
<circle cx="537.2" cy="261.7" r="1.5" fill="#e8921f"/>
<circle cx="548.8" cy="262.4" r="1.5" fill="#e8921f"/>
<circle cx="560.4" cy="249.4" r="1.5" fill="#e8921f"/>
<circle cx="572.0" cy="258.5" r="1.5" fill="#e8921f"/>
<circle cx="583.6" cy="257.8" r="1.5" fill="#e8921f"/>
<circle cx="595.2" cy="256.5" r="1.5" fill="#e8921f"/>
<circle cx="606.8" cy="260.4" r="1.5" fill="#e8921f"/>
<circle cx="618.4" cy="260.4" r="1.5" fill="#e8921f"/>
<polyline points="502.4,220.1 514.0,223.6 525.6,217.2 537.2,206.5 548.8,223.6 560.4,243.6 572.0,209.4 583.6,203.0 595.2,181.7 606.8,204.0 618.4,226.5 630.0,232.4 641.6,222.3" fill="none" stroke="#2566ae" stroke-width="1.0" stroke-linejoin="round"/>
<path d="M502.4 218.2L504.3 221.5L500.5 221.5Z" fill="#2566ae"/>
<path d="M514.0 221.7L515.9 225.0L512.1 225.0Z" fill="#2566ae"/>
<path d="M525.6 215.3L527.5 218.6L523.7 218.6Z" fill="#2566ae"/>
<path d="M537.2 204.6L539.1 207.9L535.3 207.9Z" fill="#2566ae"/>
<path d="M548.8 221.7L550.7 225.0L546.9 225.0Z" fill="#2566ae"/>
<path d="M560.4 241.7L562.3 245.0L558.5 245.0Z" fill="#2566ae"/>
<path d="M572.0 207.5L573.9 210.8L570.1 210.8Z" fill="#2566ae"/>
<path d="M583.6 201.1L585.5 204.4L581.7 204.4Z" fill="#2566ae"/>
<path d="M595.2 179.8L597.1 183.1L593.3 183.1Z" fill="#2566ae"/>
<path d="M606.8 202.1L608.7 205.4L604.9 205.4Z" fill="#2566ae"/>
<path d="M618.4 224.6L620.3 227.9L616.5 227.9Z" fill="#2566ae"/>
<path d="M630.0 230.5L631.9 233.8L628.1 233.8Z" fill="#2566ae"/>
<path d="M641.6 220.4L643.5 223.7L639.7 223.7Z" fill="#2566ae"/>
<line x1="494.8" x2="501.3" y1="288.2" y2="288.2" stroke="#e8921f" stroke-width="0.8"/>
<circle cx="498.1" cy="288.2" r="1.5" fill="#e8921f"/>
<text x="503.4" y="290.2" font-size="5.6" fill="#6b6b6b">VESSEL</text>
<line x1="533.4" x2="539.9" y1="288.2" y2="288.2" stroke="#183a78" stroke-width="0.8"/>
<path d="M536.6 286.4L538.4 288.2L536.6 290.0L534.9 288.2Z" fill="#183a78"/>
<text x="542.0" y="290.2" font-size="5.6" fill="#6b6b6b">RAIL</text>
<line x1="561.5" x2="568.0" y1="288.2" y2="288.2" stroke="#5d9ad6" stroke-width="0.8"/>
<circle cx="564.8" cy="288.2" r="1.7" fill="#5d9ad6"/>
<text x="570.2" y="290.2" font-size="5.6" fill="#6b6b6b">AIRPLANE</text>
<line x1="606.0" x2="612.5" y1="288.2" y2="288.2" stroke="#2566ae" stroke-width="0.8"/>
<path d="M609.2 286.3L611.1 289.6L607.4 289.6Z" fill="#2566ae"/>
<text x="614.6" y="290.2" font-size="5.6" fill="#6b6b6b">TRUCK</text>
<text x="152.3" y="313.6" font-size="9.4" fill="#2e6aae" textLength="105.7" lengthAdjust="spacingAndGlyphs">Total Actual SO2 Emissions</text>
<text x="205.6" y="323.1" text-anchor="middle" font-size="5.7" fill="#222">Total value: 7.49 t</text>
<line x1="136.6" x2="287.4" y1="425.9" y2="425.9" stroke="#e6e6e6" stroke-width="0.6"/>
<text x="131.2" y="427.9" text-anchor="end" font-size="5.6" fill="#666">0</text>
<line x1="136.6" x2="287.4" y1="393.6" y2="393.6" stroke="#e6e6e6" stroke-width="0.6"/>
<text x="131.2" y="395.6" text-anchor="end" font-size="5.6" fill="#666">0.5</text>
<line x1="136.6" x2="287.4" y1="361.4" y2="361.4" stroke="#e6e6e6" stroke-width="0.6"/>
<text x="131.2" y="363.4" text-anchor="end" font-size="5.6" fill="#666">1</text>
<line x1="136.6" x2="287.4" y1="329.1" y2="329.1" stroke="#e6e6e6" stroke-width="0.6"/>
<text x="131.2" y="331.1" text-anchor="end" font-size="5.6" fill="#666">1.5</text>
<text x="142.4" y="433.8" text-anchor="middle" font-size="5.0" fill="#3f4654" font-weight="bold" stroke="#3f4654" stroke-width="0.15" textLength="5.6" lengthAdjust="spacingAndGlyphs">11</text>
<line x1="139.8" x2="145.0" y1="435.1" y2="435.1" stroke="#4b5261" stroke-width="0.9"/>
<text x="142.4" y="440.9" text-anchor="middle" font-size="5.4" fill="#3f4654" font-weight="bold" stroke="#3f4654" stroke-width="0.25" textLength="5.6" lengthAdjust="spacingAndGlyphs">23</text>
<text x="154.0" y="433.8" text-anchor="middle" font-size="5.0" fill="#3f4654" font-weight="bold" stroke="#3f4654" stroke-width="0.15" textLength="5.6" lengthAdjust="spacingAndGlyphs">12</text>
<line x1="151.4" x2="156.6" y1="435.1" y2="435.1" stroke="#4b5261" stroke-width="0.9"/>
<text x="154.0" y="440.9" text-anchor="middle" font-size="5.4" fill="#3f4654" font-weight="bold" stroke="#3f4654" stroke-width="0.25" textLength="5.6" lengthAdjust="spacingAndGlyphs">23</text>
<text x="165.6" y="433.8" text-anchor="middle" font-size="5.0" fill="#3f4654" font-weight="bold" stroke="#3f4654" stroke-width="0.15" textLength="2.8" lengthAdjust="spacingAndGlyphs">1</text>
<line x1="163.0" x2="168.2" y1="435.1" y2="435.1" stroke="#4b5261" stroke-width="0.9"/>
<text x="165.6" y="440.9" text-anchor="middle" font-size="5.4" fill="#3f4654" font-weight="bold" stroke="#3f4654" stroke-width="0.25" textLength="5.6" lengthAdjust="spacingAndGlyphs">24</text>
<text x="177.2" y="433.8" text-anchor="middle" font-size="5.0" fill="#3f4654" font-weight="bold" stroke="#3f4654" stroke-width="0.15" textLength="2.8" lengthAdjust="spacingAndGlyphs">2</text>
<line x1="174.6" x2="179.8" y1="435.1" y2="435.1" stroke="#4b5261" stroke-width="0.9"/>
<text x="177.2" y="440.9" text-anchor="middle" font-size="5.4" fill="#3f4654" font-weight="bold" stroke="#3f4654" stroke-width="0.25" textLength="5.6" lengthAdjust="spacingAndGlyphs">24</text>
<text x="188.8" y="433.8" text-anchor="middle" font-size="5.0" fill="#3f4654" font-weight="bold" stroke="#3f4654" stroke-width="0.15" textLength="2.8" lengthAdjust="spacingAndGlyphs">3</text>
<line x1="186.2" x2="191.4" y1="435.1" y2="435.1" stroke="#4b5261" stroke-width="0.9"/>
<text x="188.8" y="440.9" text-anchor="middle" font-size="5.4" fill="#3f4654" font-weight="bold" stroke="#3f4654" stroke-width="0.25" textLength="5.6" lengthAdjust="spacingAndGlyphs">24</text>
<text x="200.4" y="433.8" text-anchor="middle" font-size="5.0" fill="#3f4654" font-weight="bold" stroke="#3f4654" stroke-width="0.15" textLength="2.8" lengthAdjust="spacingAndGlyphs">4</text>
<line x1="197.8" x2="203.0" y1="435.1" y2="435.1" stroke="#4b5261" stroke-width="0.9"/>
<text x="200.4" y="440.9" text-anchor="middle" font-size="5.4" fill="#3f4654" font-weight="bold" stroke="#3f4654" stroke-width="0.25" textLength="5.6" lengthAdjust="spacingAndGlyphs">24</text>
<text x="212.0" y="433.8" text-anchor="middle" font-size="5.0" fill="#3f4654" font-weight="bold" stroke="#3f4654" stroke-width="0.15" textLength="2.8" lengthAdjust="spacingAndGlyphs">5</text>
<line x1="209.4" x2="214.6" y1="435.1" y2="435.1" stroke="#4b5261" stroke-width="0.9"/>
<text x="212.0" y="440.9" text-anchor="middle" font-size="5.4" fill="#3f4654" font-weight="bold" stroke="#3f4654" stroke-width="0.25" textLength="5.6" lengthAdjust="spacingAndGlyphs">24</text>
<text x="223.6" y="433.8" text-anchor="middle" font-size="5.0" fill="#3f4654" font-weight="bold" stroke="#3f4654" stroke-width="0.15" textLength="2.8" lengthAdjust="spacingAndGlyphs">6</text>
<line x1="221.0" x2="226.2" y1="435.1" y2="435.1" stroke="#4b5261" stroke-width="0.9"/>
<text x="223.6" y="440.9" text-anchor="middle" font-size="5.4" fill="#3f4654" font-weight="bold" stroke="#3f4654" stroke-width="0.25" textLength="5.6" lengthAdjust="spacingAndGlyphs">24</text>
<text x="235.2" y="433.8" text-anchor="middle" font-size="5.0" fill="#3f4654" font-weight="bold" stroke="#3f4654" stroke-width="0.15" textLength="2.8" lengthAdjust="spacingAndGlyphs">7</text>
<line x1="232.6" x2="237.8" y1="435.1" y2="435.1" stroke="#4b5261" stroke-width="0.9"/>
<text x="235.2" y="440.9" text-anchor="middle" font-size="5.4" fill="#3f4654" font-weight="bold" stroke="#3f4654" stroke-width="0.25" textLength="5.6" lengthAdjust="spacingAndGlyphs">24</text>
<text x="246.8" y="433.8" text-anchor="middle" font-size="5.0" fill="#3f4654" font-weight="bold" stroke="#3f4654" stroke-width="0.15" textLength="2.8" lengthAdjust="spacingAndGlyphs">8</text>
<line x1="244.2" x2="249.4" y1="435.1" y2="435.1" stroke="#4b5261" stroke-width="0.9"/>
<text x="246.8" y="440.9" text-anchor="middle" font-size="5.4" fill="#3f4654" font-weight="bold" stroke="#3f4654" stroke-width="0.25" textLength="5.6" lengthAdjust="spacingAndGlyphs">24</text>
<text x="258.4" y="433.8" text-anchor="middle" font-size="5.0" fill="#3f4654" font-weight="bold" stroke="#3f4654" stroke-width="0.15" textLength="2.8" lengthAdjust="spacingAndGlyphs">9</text>
<line x1="255.8" x2="261.0" y1="435.1" y2="435.1" stroke="#4b5261" stroke-width="0.9"/>
<text x="258.4" y="440.9" text-anchor="middle" font-size="5.4" fill="#3f4654" font-weight="bold" stroke="#3f4654" stroke-width="0.25" textLength="5.6" lengthAdjust="spacingAndGlyphs">24</text>
<text x="270.0" y="433.8" text-anchor="middle" font-size="5.0" fill="#3f4654" font-weight="bold" stroke="#3f4654" stroke-width="0.15" textLength="5.6" lengthAdjust="spacingAndGlyphs">10</text>
<line x1="267.4" x2="272.6" y1="435.1" y2="435.1" stroke="#4b5261" stroke-width="0.9"/>
<text x="270.0" y="440.9" text-anchor="middle" font-size="5.4" fill="#3f4654" font-weight="bold" stroke="#3f4654" stroke-width="0.25" textLength="5.6" lengthAdjust="spacingAndGlyphs">24</text>
<text x="281.6" y="433.8" text-anchor="middle" font-size="5.0" fill="#3f4654" font-weight="bold" stroke="#3f4654" stroke-width="0.15" textLength="5.6" lengthAdjust="spacingAndGlyphs">11</text>
<line x1="279.0" x2="284.2" y1="435.1" y2="435.1" stroke="#4b5261" stroke-width="0.9"/>
<text x="281.6" y="440.9" text-anchor="middle" font-size="5.4" fill="#3f4654" font-weight="bold" stroke="#3f4654" stroke-width="0.25" textLength="5.6" lengthAdjust="spacingAndGlyphs">24</text>
<polyline points="154.0,425.9 165.6,425.3 177.2,424.6 188.8,425.9 200.4,424.6 212.0,425.3 223.6,424.6 235.2,424.6 246.8,425.3 258.4,425.3 270.0,425.3 281.6,425.9" fill="none" stroke="#5d9ad6" stroke-width="1.0" stroke-linejoin="round"/>
<circle cx="154.0" cy="425.9" r="1.7" fill="#5d9ad6"/>
<circle cx="165.6" cy="425.3" r="1.7" fill="#5d9ad6"/>
<circle cx="177.2" cy="424.6" r="1.7" fill="#5d9ad6"/>
<circle cx="188.8" cy="425.9" r="1.7" fill="#5d9ad6"/>
<circle cx="200.4" cy="424.6" r="1.7" fill="#5d9ad6"/>
<circle cx="212.0" cy="425.3" r="1.7" fill="#5d9ad6"/>
<circle cx="223.6" cy="424.6" r="1.7" fill="#5d9ad6"/>
<circle cx="235.2" cy="424.6" r="1.7" fill="#5d9ad6"/>
<circle cx="246.8" cy="425.3" r="1.7" fill="#5d9ad6"/>
<circle cx="258.4" cy="425.3" r="1.7" fill="#5d9ad6"/>
<circle cx="270.0" cy="425.3" r="1.7" fill="#5d9ad6"/>
<circle cx="281.6" cy="425.9" r="1.7" fill="#5d9ad6"/>
<polyline points="177.2,424.6 188.8,420.1 200.4,424.6 212.0,425.3 223.6,425.3 235.2,425.3" fill="none" stroke="#183a78" stroke-width="1.0" stroke-linejoin="round"/>
<path d="M177.2 422.8L179.0 424.6L177.2 426.4L175.4 424.6Z" fill="#183a78"/>
<path d="M188.8 418.3L190.6 420.1L188.8 421.9L187.0 420.1Z" fill="#183a78"/>
<path d="M200.4 422.8L202.2 424.6L200.4 426.4L198.6 424.6Z" fill="#183a78"/>
<path d="M212.0 423.5L213.8 425.3L212.0 427.1L210.2 425.3Z" fill="#183a78"/>
<path d="M223.6 423.5L225.4 425.3L223.6 427.1L221.8 425.3Z" fill="#183a78"/>
<path d="M235.2 423.5L237.0 425.3L235.2 427.1L233.4 425.3Z" fill="#183a78"/>
<polyline points="142.4,417.1 154.0,422.2 165.6,418.6 177.2,425.3 188.8,425.6 200.4,423.3 212.0,425.3 223.6,425.3 235.2,425.3 246.8,425.3 258.4,425.3" fill="none" stroke="#e8921f" stroke-width="1.0" stroke-linejoin="round"/>
<circle cx="142.4" cy="417.1" r="1.5" fill="#e8921f"/>
<circle cx="154.0" cy="422.2" r="1.5" fill="#e8921f"/>
<circle cx="165.6" cy="418.6" r="1.5" fill="#e8921f"/>
<circle cx="177.2" cy="425.3" r="1.5" fill="#e8921f"/>
<circle cx="188.8" cy="425.6" r="1.5" fill="#e8921f"/>
<circle cx="200.4" cy="423.3" r="1.5" fill="#e8921f"/>
<circle cx="212.0" cy="425.3" r="1.5" fill="#e8921f"/>
<circle cx="223.6" cy="425.3" r="1.5" fill="#e8921f"/>
<circle cx="235.2" cy="425.3" r="1.5" fill="#e8921f"/>
<circle cx="246.8" cy="425.3" r="1.5" fill="#e8921f"/>
<circle cx="258.4" cy="425.3" r="1.5" fill="#e8921f"/>
<polyline points="142.4,379.4 154.0,366.7 165.6,362.4 177.2,346.8 188.8,391.1 200.4,409.8 212.0,392.1 223.6,396.5 235.2,389.6 246.8,408.0 258.4,416.7 270.0,421.8 281.6,422.0" fill="none" stroke="#2566ae" stroke-width="1.0" stroke-linejoin="round"/>
<path d="M142.4 377.5L144.3 380.8L140.5 380.8Z" fill="#2566ae"/>
<path d="M154.0 364.8L155.9 368.1L152.1 368.1Z" fill="#2566ae"/>
<path d="M165.6 360.5L167.5 363.8L163.7 363.8Z" fill="#2566ae"/>
<path d="M177.2 344.9L179.1 348.2L175.3 348.2Z" fill="#2566ae"/>
<path d="M188.8 389.2L190.7 392.5L186.9 392.5Z" fill="#2566ae"/>
<path d="M200.4 407.9L202.3 411.2L198.5 411.2Z" fill="#2566ae"/>
<path d="M212.0 390.2L213.9 393.5L210.1 393.5Z" fill="#2566ae"/>
<path d="M223.6 394.6L225.5 397.9L221.7 397.9Z" fill="#2566ae"/>
<path d="M235.2 387.7L237.1 391.0L233.3 391.0Z" fill="#2566ae"/>
<path d="M246.8 406.1L248.7 409.4L244.9 409.4Z" fill="#2566ae"/>
<path d="M258.4 414.8L260.3 418.1L256.5 418.1Z" fill="#2566ae"/>
<path d="M270.0 419.9L271.9 423.2L268.1 423.2Z" fill="#2566ae"/>
<path d="M281.6 420.1L283.5 423.4L279.7 423.4Z" fill="#2566ae"/>
<line x1="134.8" x2="141.3" y1="451.1" y2="451.1" stroke="#e8921f" stroke-width="0.8"/>
<circle cx="138.1" cy="451.1" r="1.5" fill="#e8921f"/>
<text x="143.4" y="453.1" font-size="5.6" fill="#6b6b6b">VESSEL</text>
<line x1="173.4" x2="179.9" y1="451.1" y2="451.1" stroke="#183a78" stroke-width="0.8"/>
<path d="M176.7 449.3L178.5 451.1L176.7 452.9L174.8 451.1Z" fill="#183a78"/>
<text x="182.0" y="453.1" font-size="5.6" fill="#6b6b6b">RAIL</text>
<line x1="201.5" x2="208.0" y1="451.1" y2="451.1" stroke="#5d9ad6" stroke-width="0.8"/>
<circle cx="204.8" cy="451.1" r="1.7" fill="#5d9ad6"/>
<text x="210.2" y="453.1" font-size="5.6" fill="#6b6b6b">AIRPLANE</text>
<line x1="246.0" x2="252.5" y1="451.1" y2="451.1" stroke="#2566ae" stroke-width="0.8"/>
<path d="M249.2 449.2L251.2 452.5L247.3 452.5Z" fill="#2566ae"/>
<text x="254.6" y="453.1" font-size="5.6" fill="#6b6b6b">TRUCK</text>
<text x="334.4" y="313.6" font-size="9.4" fill="#2e6aae" textLength="101.9" lengthAdjust="spacingAndGlyphs">Total Actual PM Emissions</text>
<text x="385.6" y="323.1" text-anchor="middle" font-size="5.7" fill="#222">Total value: 579.29 kg</text>
<line x1="313.6" x2="467.4" y1="425.9" y2="425.9" stroke="#e6e6e6" stroke-width="0.6"/>
<text x="308.2" y="427.9" text-anchor="end" font-size="5.6" fill="#666">0</text>
<line x1="313.6" x2="467.4" y1="393.6" y2="393.6" stroke="#e6e6e6" stroke-width="0.6"/>
<text x="308.2" y="395.6" text-anchor="end" font-size="5.6" fill="#666">20</text>
<line x1="313.6" x2="467.4" y1="361.4" y2="361.4" stroke="#e6e6e6" stroke-width="0.6"/>
<text x="308.2" y="363.4" text-anchor="end" font-size="5.6" fill="#666">40</text>
<line x1="313.6" x2="467.4" y1="329.1" y2="329.1" stroke="#e6e6e6" stroke-width="0.6"/>
<text x="308.2" y="331.1" text-anchor="end" font-size="5.6" fill="#666">60</text>
<text x="319.5" y="433.8" text-anchor="middle" font-size="5.0" fill="#3f4654" font-weight="bold" stroke="#3f4654" stroke-width="0.15" textLength="5.6" lengthAdjust="spacingAndGlyphs">11</text>
<line x1="316.9" x2="322.1" y1="435.1" y2="435.1" stroke="#4b5261" stroke-width="0.9"/>
<text x="319.5" y="440.9" text-anchor="middle" font-size="5.4" fill="#3f4654" font-weight="bold" stroke="#3f4654" stroke-width="0.25" textLength="5.6" lengthAdjust="spacingAndGlyphs">23</text>
<text x="331.3" y="433.8" text-anchor="middle" font-size="5.0" fill="#3f4654" font-weight="bold" stroke="#3f4654" stroke-width="0.15" textLength="5.6" lengthAdjust="spacingAndGlyphs">12</text>
<line x1="328.7" x2="333.9" y1="435.1" y2="435.1" stroke="#4b5261" stroke-width="0.9"/>
<text x="331.3" y="440.9" text-anchor="middle" font-size="5.4" fill="#3f4654" font-weight="bold" stroke="#3f4654" stroke-width="0.25" textLength="5.6" lengthAdjust="spacingAndGlyphs">23</text>
<text x="343.2" y="433.8" text-anchor="middle" font-size="5.0" fill="#3f4654" font-weight="bold" stroke="#3f4654" stroke-width="0.15" textLength="2.8" lengthAdjust="spacingAndGlyphs">1</text>
<line x1="340.6" x2="345.8" y1="435.1" y2="435.1" stroke="#4b5261" stroke-width="0.9"/>
<text x="343.2" y="440.9" text-anchor="middle" font-size="5.4" fill="#3f4654" font-weight="bold" stroke="#3f4654" stroke-width="0.25" textLength="5.6" lengthAdjust="spacingAndGlyphs">24</text>
<text x="355.0" y="433.8" text-anchor="middle" font-size="5.0" fill="#3f4654" font-weight="bold" stroke="#3f4654" stroke-width="0.15" textLength="2.8" lengthAdjust="spacingAndGlyphs">2</text>
<line x1="352.4" x2="357.6" y1="435.1" y2="435.1" stroke="#4b5261" stroke-width="0.9"/>
<text x="355.0" y="440.9" text-anchor="middle" font-size="5.4" fill="#3f4654" font-weight="bold" stroke="#3f4654" stroke-width="0.25" textLength="5.6" lengthAdjust="spacingAndGlyphs">24</text>
<text x="366.8" y="433.8" text-anchor="middle" font-size="5.0" fill="#3f4654" font-weight="bold" stroke="#3f4654" stroke-width="0.15" textLength="2.8" lengthAdjust="spacingAndGlyphs">3</text>
<line x1="364.2" x2="369.4" y1="435.1" y2="435.1" stroke="#4b5261" stroke-width="0.9"/>
<text x="366.8" y="440.9" text-anchor="middle" font-size="5.4" fill="#3f4654" font-weight="bold" stroke="#3f4654" stroke-width="0.25" textLength="5.6" lengthAdjust="spacingAndGlyphs">24</text>
<text x="378.7" y="433.8" text-anchor="middle" font-size="5.0" fill="#3f4654" font-weight="bold" stroke="#3f4654" stroke-width="0.15" textLength="2.8" lengthAdjust="spacingAndGlyphs">4</text>
<line x1="376.1" x2="381.3" y1="435.1" y2="435.1" stroke="#4b5261" stroke-width="0.9"/>
<text x="378.7" y="440.9" text-anchor="middle" font-size="5.4" fill="#3f4654" font-weight="bold" stroke="#3f4654" stroke-width="0.25" textLength="5.6" lengthAdjust="spacingAndGlyphs">24</text>
<text x="390.5" y="433.8" text-anchor="middle" font-size="5.0" fill="#3f4654" font-weight="bold" stroke="#3f4654" stroke-width="0.15" textLength="2.8" lengthAdjust="spacingAndGlyphs">5</text>
<line x1="387.9" x2="393.1" y1="435.1" y2="435.1" stroke="#4b5261" stroke-width="0.9"/>
<text x="390.5" y="440.9" text-anchor="middle" font-size="5.4" fill="#3f4654" font-weight="bold" stroke="#3f4654" stroke-width="0.25" textLength="5.6" lengthAdjust="spacingAndGlyphs">24</text>
<text x="402.3" y="433.8" text-anchor="middle" font-size="5.0" fill="#3f4654" font-weight="bold" stroke="#3f4654" stroke-width="0.15" textLength="2.8" lengthAdjust="spacingAndGlyphs">6</text>
<line x1="399.7" x2="404.9" y1="435.1" y2="435.1" stroke="#4b5261" stroke-width="0.9"/>
<text x="402.3" y="440.9" text-anchor="middle" font-size="5.4" fill="#3f4654" font-weight="bold" stroke="#3f4654" stroke-width="0.25" textLength="5.6" lengthAdjust="spacingAndGlyphs">24</text>
<text x="414.2" y="433.8" text-anchor="middle" font-size="5.0" fill="#3f4654" font-weight="bold" stroke="#3f4654" stroke-width="0.15" textLength="2.8" lengthAdjust="spacingAndGlyphs">7</text>
<line x1="411.6" x2="416.8" y1="435.1" y2="435.1" stroke="#4b5261" stroke-width="0.9"/>
<text x="414.2" y="440.9" text-anchor="middle" font-size="5.4" fill="#3f4654" font-weight="bold" stroke="#3f4654" stroke-width="0.25" textLength="5.6" lengthAdjust="spacingAndGlyphs">24</text>
<text x="426.0" y="433.8" text-anchor="middle" font-size="5.0" fill="#3f4654" font-weight="bold" stroke="#3f4654" stroke-width="0.15" textLength="2.8" lengthAdjust="spacingAndGlyphs">8</text>
<line x1="423.4" x2="428.6" y1="435.1" y2="435.1" stroke="#4b5261" stroke-width="0.9"/>
<text x="426.0" y="440.9" text-anchor="middle" font-size="5.4" fill="#3f4654" font-weight="bold" stroke="#3f4654" stroke-width="0.25" textLength="5.6" lengthAdjust="spacingAndGlyphs">24</text>
<text x="437.8" y="433.8" text-anchor="middle" font-size="5.0" fill="#3f4654" font-weight="bold" stroke="#3f4654" stroke-width="0.15" textLength="2.8" lengthAdjust="spacingAndGlyphs">9</text>
<line x1="435.2" x2="440.4" y1="435.1" y2="435.1" stroke="#4b5261" stroke-width="0.9"/>
<text x="437.8" y="440.9" text-anchor="middle" font-size="5.4" fill="#3f4654" font-weight="bold" stroke="#3f4654" stroke-width="0.25" textLength="5.6" lengthAdjust="spacingAndGlyphs">24</text>
<text x="449.7" y="433.8" text-anchor="middle" font-size="5.0" fill="#3f4654" font-weight="bold" stroke="#3f4654" stroke-width="0.15" textLength="5.6" lengthAdjust="spacingAndGlyphs">10</text>
<line x1="447.1" x2="452.3" y1="435.1" y2="435.1" stroke="#4b5261" stroke-width="0.9"/>
<text x="449.7" y="440.9" text-anchor="middle" font-size="5.4" fill="#3f4654" font-weight="bold" stroke="#3f4654" stroke-width="0.25" textLength="5.6" lengthAdjust="spacingAndGlyphs">24</text>
<text x="461.5" y="433.8" text-anchor="middle" font-size="5.0" fill="#3f4654" font-weight="bold" stroke="#3f4654" stroke-width="0.15" textLength="5.6" lengthAdjust="spacingAndGlyphs">11</text>
<line x1="458.9" x2="464.1" y1="435.1" y2="435.1" stroke="#4b5261" stroke-width="0.9"/>
<text x="461.5" y="440.9" text-anchor="middle" font-size="5.4" fill="#3f4654" font-weight="bold" stroke="#3f4654" stroke-width="0.25" textLength="5.6" lengthAdjust="spacingAndGlyphs">24</text>
<polyline points="331.3,425.6 343.2,425.1 355.0,424.0 366.8,425.4 378.7,423.5 390.5,424.3 402.3,423.0 414.2,421.9 426.0,424.6 437.8,425.1 449.7,424.9 461.5,425.9" fill="none" stroke="#5d9ad6" stroke-width="1.0" stroke-linejoin="round"/>
<circle cx="331.3" cy="425.6" r="1.7" fill="#5d9ad6"/>
<circle cx="343.2" cy="425.1" r="1.7" fill="#5d9ad6"/>
<circle cx="355.0" cy="424.0" r="1.7" fill="#5d9ad6"/>
<circle cx="366.8" cy="425.4" r="1.7" fill="#5d9ad6"/>
<circle cx="378.7" cy="423.5" r="1.7" fill="#5d9ad6"/>
<circle cx="390.5" cy="424.3" r="1.7" fill="#5d9ad6"/>
<circle cx="402.3" cy="423.0" r="1.7" fill="#5d9ad6"/>
<circle cx="414.2" cy="421.9" r="1.7" fill="#5d9ad6"/>
<circle cx="426.0" cy="424.6" r="1.7" fill="#5d9ad6"/>
<circle cx="437.8" cy="425.1" r="1.7" fill="#5d9ad6"/>
<circle cx="449.7" cy="424.9" r="1.7" fill="#5d9ad6"/>
<circle cx="461.5" cy="425.9" r="1.7" fill="#5d9ad6"/>
<polyline points="343.2,424.3 355.0,421.5 366.8,411.2 378.7,422.4 390.5,424.3 402.3,423.5 414.2,421.9" fill="none" stroke="#183a78" stroke-width="1.0" stroke-linejoin="round"/>
<path d="M343.2 422.5L345.0 424.3L343.2 426.1L341.4 424.3Z" fill="#183a78"/>
<path d="M355.0 419.7L356.8 421.5L355.0 423.3L353.2 421.5Z" fill="#183a78"/>
<path d="M366.8 409.4L368.6 411.2L366.8 413.0L365.0 411.2Z" fill="#183a78"/>
<path d="M378.7 420.6L380.5 422.4L378.7 424.2L376.9 422.4Z" fill="#183a78"/>
<path d="M390.5 422.5L392.3 424.3L390.5 426.1L388.7 424.3Z" fill="#183a78"/>
<path d="M402.3 421.7L404.1 423.5L402.3 425.3L400.5 423.5Z" fill="#183a78"/>
<path d="M414.2 420.1L416.0 421.9L414.2 423.7L412.4 421.9Z" fill="#183a78"/>
<polyline points="319.5,361.0 331.3,399.0 343.2,371.4 355.0,423.2 366.8,424.6 378.7,407.3 390.5,419.6 402.3,419.1 414.2,417.5 426.0,421.5 437.8,422.7" fill="none" stroke="#e8921f" stroke-width="1.0" stroke-linejoin="round"/>
<circle cx="319.5" cy="361.0" r="1.5" fill="#e8921f"/>
<circle cx="331.3" cy="399.0" r="1.5" fill="#e8921f"/>
<circle cx="343.2" cy="371.4" r="1.5" fill="#e8921f"/>
<circle cx="355.0" cy="423.2" r="1.5" fill="#e8921f"/>
<circle cx="366.8" cy="424.6" r="1.5" fill="#e8921f"/>
<circle cx="378.7" cy="407.3" r="1.5" fill="#e8921f"/>
<circle cx="390.5" cy="419.6" r="1.5" fill="#e8921f"/>
<circle cx="402.3" cy="419.1" r="1.5" fill="#e8921f"/>
<circle cx="414.2" cy="417.5" r="1.5" fill="#e8921f"/>
<circle cx="426.0" cy="421.5" r="1.5" fill="#e8921f"/>
<circle cx="437.8" cy="422.7" r="1.5" fill="#e8921f"/>
<polyline points="319.5,362.3 331.3,365.6 343.2,362.0 355.0,345.7 366.8,382.7 378.7,404.4 390.5,367.5 402.3,348.6 414.2,334.7 426.0,372.2 437.8,396.9 449.7,406.7 461.5,403.2" fill="none" stroke="#2566ae" stroke-width="1.0" stroke-linejoin="round"/>
<path d="M319.5 360.4L321.4 363.7L317.6 363.7Z" fill="#2566ae"/>
<path d="M331.3 363.7L333.2 367.0L329.4 367.0Z" fill="#2566ae"/>
<path d="M343.2 360.1L345.1 363.4L341.3 363.4Z" fill="#2566ae"/>
<path d="M355.0 343.8L356.9 347.1L353.1 347.1Z" fill="#2566ae"/>
<path d="M366.8 380.8L368.7 384.1L364.9 384.1Z" fill="#2566ae"/>
<path d="M378.7 402.5L380.6 405.8L376.8 405.8Z" fill="#2566ae"/>
<path d="M390.5 365.6L392.4 368.9L388.6 368.9Z" fill="#2566ae"/>
<path d="M402.3 346.7L404.2 350.0L400.4 350.0Z" fill="#2566ae"/>
<path d="M414.2 332.8L416.1 336.1L412.3 336.1Z" fill="#2566ae"/>
<path d="M426.0 370.3L427.9 373.6L424.1 373.6Z" fill="#2566ae"/>
<path d="M437.8 395.0L439.7 398.3L435.9 398.3Z" fill="#2566ae"/>
<path d="M449.7 404.8L451.6 408.1L447.8 408.1Z" fill="#2566ae"/>
<path d="M461.5 401.3L463.4 404.6L459.6 404.6Z" fill="#2566ae"/>
<line x1="314.8" x2="321.3" y1="451.1" y2="451.1" stroke="#e8921f" stroke-width="0.8"/>
<circle cx="318.1" cy="451.1" r="1.5" fill="#e8921f"/>
<text x="323.4" y="453.1" font-size="5.6" fill="#6b6b6b">VESSEL</text>
<line x1="353.4" x2="359.9" y1="451.1" y2="451.1" stroke="#183a78" stroke-width="0.8"/>
<path d="M356.6 449.3L358.4 451.1L356.6 452.9L354.8 451.1Z" fill="#183a78"/>
<text x="362.0" y="453.1" font-size="5.6" fill="#6b6b6b">RAIL</text>
<line x1="381.5" x2="388.0" y1="451.1" y2="451.1" stroke="#5d9ad6" stroke-width="0.8"/>
<circle cx="384.8" cy="451.1" r="1.7" fill="#5d9ad6"/>
<text x="390.2" y="453.1" font-size="5.6" fill="#6b6b6b">AIRPLANE</text>
<line x1="426.0" x2="432.5" y1="451.1" y2="451.1" stroke="#2566ae" stroke-width="0.8"/>
<path d="M429.2 449.2L431.1 452.5L427.4 452.5Z" fill="#2566ae"/>
<text x="434.6" y="453.1" font-size="5.6" fill="#6b6b6b">TRUCK</text>
<text x="528.9" y="313.6" font-size="9.4" fill="#2e6aae" textLength="74.1" lengthAdjust="spacingAndGlyphs">Total Actual Energy</text>
<text x="565.6" y="323.1" text-anchor="middle" font-size="5.7" fill="#222">Total value: 67948801.85 MJ</text>
<line x1="500.3" x2="647.7" y1="425.9" y2="425.9" stroke="#e6e6e6" stroke-width="0.6"/>
<text x="494.9" y="427.9" text-anchor="end" font-size="5.6" fill="#666">0</text>
<line x1="500.3" x2="647.7" y1="401.7" y2="401.7" stroke="#e6e6e6" stroke-width="0.6"/>
<text x="494.9" y="403.7" text-anchor="end" font-size="5.6" fill="#666">2.5M</text>
<line x1="500.3" x2="647.7" y1="377.5" y2="377.5" stroke="#e6e6e6" stroke-width="0.6"/>
<text x="494.9" y="379.5" text-anchor="end" font-size="5.6" fill="#666">5M</text>
<line x1="500.3" x2="647.7" y1="353.3" y2="353.3" stroke="#e6e6e6" stroke-width="0.6"/>
<text x="494.9" y="355.3" text-anchor="end" font-size="5.6" fill="#666">7.5M</text>
<line x1="500.3" x2="647.7" y1="329.1" y2="329.1" stroke="#e6e6e6" stroke-width="0.6"/>
<text x="494.9" y="331.1" text-anchor="end" font-size="5.6" fill="#666">10M</text>
<text x="506.0" y="433.8" text-anchor="middle" font-size="5.0" fill="#3f4654" font-weight="bold" stroke="#3f4654" stroke-width="0.15" textLength="5.6" lengthAdjust="spacingAndGlyphs">11</text>
<line x1="503.4" x2="508.6" y1="435.1" y2="435.1" stroke="#4b5261" stroke-width="0.9"/>
<text x="506.0" y="440.9" text-anchor="middle" font-size="5.4" fill="#3f4654" font-weight="bold" stroke="#3f4654" stroke-width="0.25" textLength="5.6" lengthAdjust="spacingAndGlyphs">23</text>
<text x="517.3" y="433.8" text-anchor="middle" font-size="5.0" fill="#3f4654" font-weight="bold" stroke="#3f4654" stroke-width="0.15" textLength="5.6" lengthAdjust="spacingAndGlyphs">12</text>
<line x1="514.7" x2="519.9" y1="435.1" y2="435.1" stroke="#4b5261" stroke-width="0.9"/>
<text x="517.3" y="440.9" text-anchor="middle" font-size="5.4" fill="#3f4654" font-weight="bold" stroke="#3f4654" stroke-width="0.25" textLength="5.6" lengthAdjust="spacingAndGlyphs">23</text>
<text x="528.6" y="433.8" text-anchor="middle" font-size="5.0" fill="#3f4654" font-weight="bold" stroke="#3f4654" stroke-width="0.15" textLength="2.8" lengthAdjust="spacingAndGlyphs">1</text>
<line x1="526.0" x2="531.2" y1="435.1" y2="435.1" stroke="#4b5261" stroke-width="0.9"/>
<text x="528.6" y="440.9" text-anchor="middle" font-size="5.4" fill="#3f4654" font-weight="bold" stroke="#3f4654" stroke-width="0.25" textLength="5.6" lengthAdjust="spacingAndGlyphs">24</text>
<text x="540.0" y="433.8" text-anchor="middle" font-size="5.0" fill="#3f4654" font-weight="bold" stroke="#3f4654" stroke-width="0.15" textLength="2.8" lengthAdjust="spacingAndGlyphs">2</text>
<line x1="537.4" x2="542.6" y1="435.1" y2="435.1" stroke="#4b5261" stroke-width="0.9"/>
<text x="540.0" y="440.9" text-anchor="middle" font-size="5.4" fill="#3f4654" font-weight="bold" stroke="#3f4654" stroke-width="0.25" textLength="5.6" lengthAdjust="spacingAndGlyphs">24</text>
<text x="551.3" y="433.8" text-anchor="middle" font-size="5.0" fill="#3f4654" font-weight="bold" stroke="#3f4654" stroke-width="0.15" textLength="2.8" lengthAdjust="spacingAndGlyphs">3</text>
<line x1="548.7" x2="553.9" y1="435.1" y2="435.1" stroke="#4b5261" stroke-width="0.9"/>
<text x="551.3" y="440.9" text-anchor="middle" font-size="5.4" fill="#3f4654" font-weight="bold" stroke="#3f4654" stroke-width="0.25" textLength="5.6" lengthAdjust="spacingAndGlyphs">24</text>
<text x="562.7" y="433.8" text-anchor="middle" font-size="5.0" fill="#3f4654" font-weight="bold" stroke="#3f4654" stroke-width="0.15" textLength="2.8" lengthAdjust="spacingAndGlyphs">4</text>
<line x1="560.1" x2="565.3" y1="435.1" y2="435.1" stroke="#4b5261" stroke-width="0.9"/>
<text x="562.7" y="440.9" text-anchor="middle" font-size="5.4" fill="#3f4654" font-weight="bold" stroke="#3f4654" stroke-width="0.25" textLength="5.6" lengthAdjust="spacingAndGlyphs">24</text>
<text x="574.0" y="433.8" text-anchor="middle" font-size="5.0" fill="#3f4654" font-weight="bold" stroke="#3f4654" stroke-width="0.15" textLength="2.8" lengthAdjust="spacingAndGlyphs">5</text>
<line x1="571.4" x2="576.6" y1="435.1" y2="435.1" stroke="#4b5261" stroke-width="0.9"/>
<text x="574.0" y="440.9" text-anchor="middle" font-size="5.4" fill="#3f4654" font-weight="bold" stroke="#3f4654" stroke-width="0.25" textLength="5.6" lengthAdjust="spacingAndGlyphs">24</text>
<text x="585.3" y="433.8" text-anchor="middle" font-size="5.0" fill="#3f4654" font-weight="bold" stroke="#3f4654" stroke-width="0.15" textLength="2.8" lengthAdjust="spacingAndGlyphs">6</text>
<line x1="582.7" x2="587.9" y1="435.1" y2="435.1" stroke="#4b5261" stroke-width="0.9"/>
<text x="585.3" y="440.9" text-anchor="middle" font-size="5.4" fill="#3f4654" font-weight="bold" stroke="#3f4654" stroke-width="0.25" textLength="5.6" lengthAdjust="spacingAndGlyphs">24</text>
<text x="596.7" y="433.8" text-anchor="middle" font-size="5.0" fill="#3f4654" font-weight="bold" stroke="#3f4654" stroke-width="0.15" textLength="2.8" lengthAdjust="spacingAndGlyphs">7</text>
<line x1="594.1" x2="599.3" y1="435.1" y2="435.1" stroke="#4b5261" stroke-width="0.9"/>
<text x="596.7" y="440.9" text-anchor="middle" font-size="5.4" fill="#3f4654" font-weight="bold" stroke="#3f4654" stroke-width="0.25" textLength="5.6" lengthAdjust="spacingAndGlyphs">24</text>
<text x="608.0" y="433.8" text-anchor="middle" font-size="5.0" fill="#3f4654" font-weight="bold" stroke="#3f4654" stroke-width="0.15" textLength="2.8" lengthAdjust="spacingAndGlyphs">8</text>
<line x1="605.4" x2="610.6" y1="435.1" y2="435.1" stroke="#4b5261" stroke-width="0.9"/>
<text x="608.0" y="440.9" text-anchor="middle" font-size="5.4" fill="#3f4654" font-weight="bold" stroke="#3f4654" stroke-width="0.25" textLength="5.6" lengthAdjust="spacingAndGlyphs">24</text>
<text x="619.4" y="433.8" text-anchor="middle" font-size="5.0" fill="#3f4654" font-weight="bold" stroke="#3f4654" stroke-width="0.15" textLength="2.8" lengthAdjust="spacingAndGlyphs">9</text>
<line x1="616.8" x2="622.0" y1="435.1" y2="435.1" stroke="#4b5261" stroke-width="0.9"/>
<text x="619.4" y="440.9" text-anchor="middle" font-size="5.4" fill="#3f4654" font-weight="bold" stroke="#3f4654" stroke-width="0.25" textLength="5.6" lengthAdjust="spacingAndGlyphs">24</text>
<text x="630.7" y="433.8" text-anchor="middle" font-size="5.0" fill="#3f4654" font-weight="bold" stroke="#3f4654" stroke-width="0.15" textLength="5.6" lengthAdjust="spacingAndGlyphs">10</text>
<line x1="628.1" x2="633.3" y1="435.1" y2="435.1" stroke="#4b5261" stroke-width="0.9"/>
<text x="630.7" y="440.9" text-anchor="middle" font-size="5.4" fill="#3f4654" font-weight="bold" stroke="#3f4654" stroke-width="0.25" textLength="5.6" lengthAdjust="spacingAndGlyphs">24</text>
<text x="642.0" y="433.8" text-anchor="middle" font-size="5.0" fill="#3f4654" font-weight="bold" stroke="#3f4654" stroke-width="0.15" textLength="5.6" lengthAdjust="spacingAndGlyphs">11</text>
<line x1="639.4" x2="644.6" y1="435.1" y2="435.1" stroke="#4b5261" stroke-width="0.9"/>
<text x="642.0" y="440.9" text-anchor="middle" font-size="5.4" fill="#3f4654" font-weight="bold" stroke="#3f4654" stroke-width="0.25" textLength="5.6" lengthAdjust="spacingAndGlyphs">24</text>
<polyline points="517.3,425.9 528.6,425.9 540.0,424.0 551.3,425.7 562.7,425.1 574.0,425.4 585.3,422.0 596.7,421.6 608.0,425.4 619.4,425.6 630.7,425.7 642.0,425.9" fill="none" stroke="#5d9ad6" stroke-width="1.0" stroke-linejoin="round"/>
<circle cx="517.3" cy="425.9" r="1.7" fill="#5d9ad6"/>
<circle cx="528.6" cy="425.9" r="1.7" fill="#5d9ad6"/>
<circle cx="540.0" cy="424.0" r="1.7" fill="#5d9ad6"/>
<circle cx="551.3" cy="425.7" r="1.7" fill="#5d9ad6"/>
<circle cx="562.7" cy="425.1" r="1.7" fill="#5d9ad6"/>
<circle cx="574.0" cy="425.4" r="1.7" fill="#5d9ad6"/>
<circle cx="585.3" cy="422.0" r="1.7" fill="#5d9ad6"/>
<circle cx="596.7" cy="421.6" r="1.7" fill="#5d9ad6"/>
<circle cx="608.0" cy="425.4" r="1.7" fill="#5d9ad6"/>
<circle cx="619.4" cy="425.6" r="1.7" fill="#5d9ad6"/>
<circle cx="630.7" cy="425.7" r="1.7" fill="#5d9ad6"/>
<circle cx="642.0" cy="425.9" r="1.7" fill="#5d9ad6"/>
<polyline points="540.0,425.4 551.3,421.8 562.7,424.6 574.0,425.4 585.3,425.3 596.7,424.9" fill="none" stroke="#183a78" stroke-width="1.0" stroke-linejoin="round"/>
<path d="M540.0 423.6L541.8 425.4L540.0 427.2L538.2 425.4Z" fill="#183a78"/>
<path d="M551.3 420.0L553.1 421.8L551.3 423.6L549.5 421.8Z" fill="#183a78"/>
<path d="M562.7 422.8L564.5 424.6L562.7 426.4L560.9 424.6Z" fill="#183a78"/>
<path d="M574.0 423.6L575.8 425.4L574.0 427.2L572.2 425.4Z" fill="#183a78"/>
<path d="M585.3 423.5L587.1 425.3L585.3 427.1L583.5 425.3Z" fill="#183a78"/>
<path d="M596.7 423.1L598.5 424.9L596.7 426.7L594.9 424.9Z" fill="#183a78"/>
<polyline points="506.0,415.0 517.3,421.8 528.6,417.2 540.0,425.4 551.3,425.6 562.7,424.0 574.0,425.4 585.3,425.5 596.7,425.5 608.0,425.6 619.4,425.6" fill="none" stroke="#e8921f" stroke-width="1.0" stroke-linejoin="round"/>
<circle cx="506.0" cy="415.0" r="1.5" fill="#e8921f"/>
<circle cx="517.3" cy="421.8" r="1.5" fill="#e8921f"/>
<circle cx="528.6" cy="417.2" r="1.5" fill="#e8921f"/>
<circle cx="540.0" cy="425.4" r="1.5" fill="#e8921f"/>
<circle cx="551.3" cy="425.6" r="1.5" fill="#e8921f"/>
<circle cx="562.7" cy="424.0" r="1.5" fill="#e8921f"/>
<circle cx="574.0" cy="425.4" r="1.5" fill="#e8921f"/>
<circle cx="585.3" cy="425.5" r="1.5" fill="#e8921f"/>
<circle cx="596.7" cy="425.5" r="1.5" fill="#e8921f"/>
<circle cx="608.0" cy="425.6" r="1.5" fill="#e8921f"/>
<circle cx="619.4" cy="425.6" r="1.5" fill="#e8921f"/>
<polyline points="506.0,363.0 517.3,371.7 528.6,365.5 540.0,350.0 551.3,391.1 562.7,408.9 574.0,376.0 585.3,352.3 596.7,343.1 608.0,385.3 619.4,405.6 630.7,416.0 642.0,416.0" fill="none" stroke="#2566ae" stroke-width="1.0" stroke-linejoin="round"/>
<path d="M506.0 361.1L507.9 364.4L504.1 364.4Z" fill="#2566ae"/>
<path d="M517.3 369.8L519.2 373.1L515.4 373.1Z" fill="#2566ae"/>
<path d="M528.6 363.6L530.5 366.9L526.7 366.9Z" fill="#2566ae"/>
<path d="M540.0 348.1L541.9 351.4L538.1 351.4Z" fill="#2566ae"/>
<path d="M551.3 389.2L553.2 392.5L549.4 392.5Z" fill="#2566ae"/>
<path d="M562.7 407.0L564.6 410.3L560.8 410.3Z" fill="#2566ae"/>
<path d="M574.0 374.1L575.9 377.4L572.1 377.4Z" fill="#2566ae"/>
<path d="M585.3 350.4L587.2 353.7L583.4 353.7Z" fill="#2566ae"/>
<path d="M596.7 341.2L598.6 344.5L594.8 344.5Z" fill="#2566ae"/>
<path d="M608.0 383.4L609.9 386.7L606.1 386.7Z" fill="#2566ae"/>
<path d="M619.4 403.7L621.3 407.0L617.5 407.0Z" fill="#2566ae"/>
<path d="M630.7 414.1L632.6 417.4L628.8 417.4Z" fill="#2566ae"/>
<path d="M642.0 414.1L643.9 417.4L640.1 417.4Z" fill="#2566ae"/>
<line x1="494.8" x2="501.3" y1="451.1" y2="451.1" stroke="#e8921f" stroke-width="0.8"/>
<circle cx="498.1" cy="451.1" r="1.5" fill="#e8921f"/>
<text x="503.4" y="453.1" font-size="5.6" fill="#6b6b6b">VESSEL</text>
<line x1="533.4" x2="539.9" y1="451.1" y2="451.1" stroke="#183a78" stroke-width="0.8"/>
<path d="M536.6 449.3L538.4 451.1L536.6 452.9L534.9 451.1Z" fill="#183a78"/>
<text x="542.0" y="453.1" font-size="5.6" fill="#6b6b6b">RAIL</text>
<line x1="561.5" x2="568.0" y1="451.1" y2="451.1" stroke="#5d9ad6" stroke-width="0.8"/>
<circle cx="564.8" cy="451.1" r="1.7" fill="#5d9ad6"/>
<text x="570.2" y="453.1" font-size="5.6" fill="#6b6b6b">AIRPLANE</text>
<line x1="606.0" x2="612.5" y1="451.1" y2="451.1" stroke="#2566ae" stroke-width="0.8"/>
<path d="M609.2 449.2L611.1 452.5L607.4 452.5Z" fill="#2566ae"/>
<text x="614.6" y="453.1" font-size="5.6" fill="#6b6b6b">TRUCK</text>
</svg>
</body></html>
